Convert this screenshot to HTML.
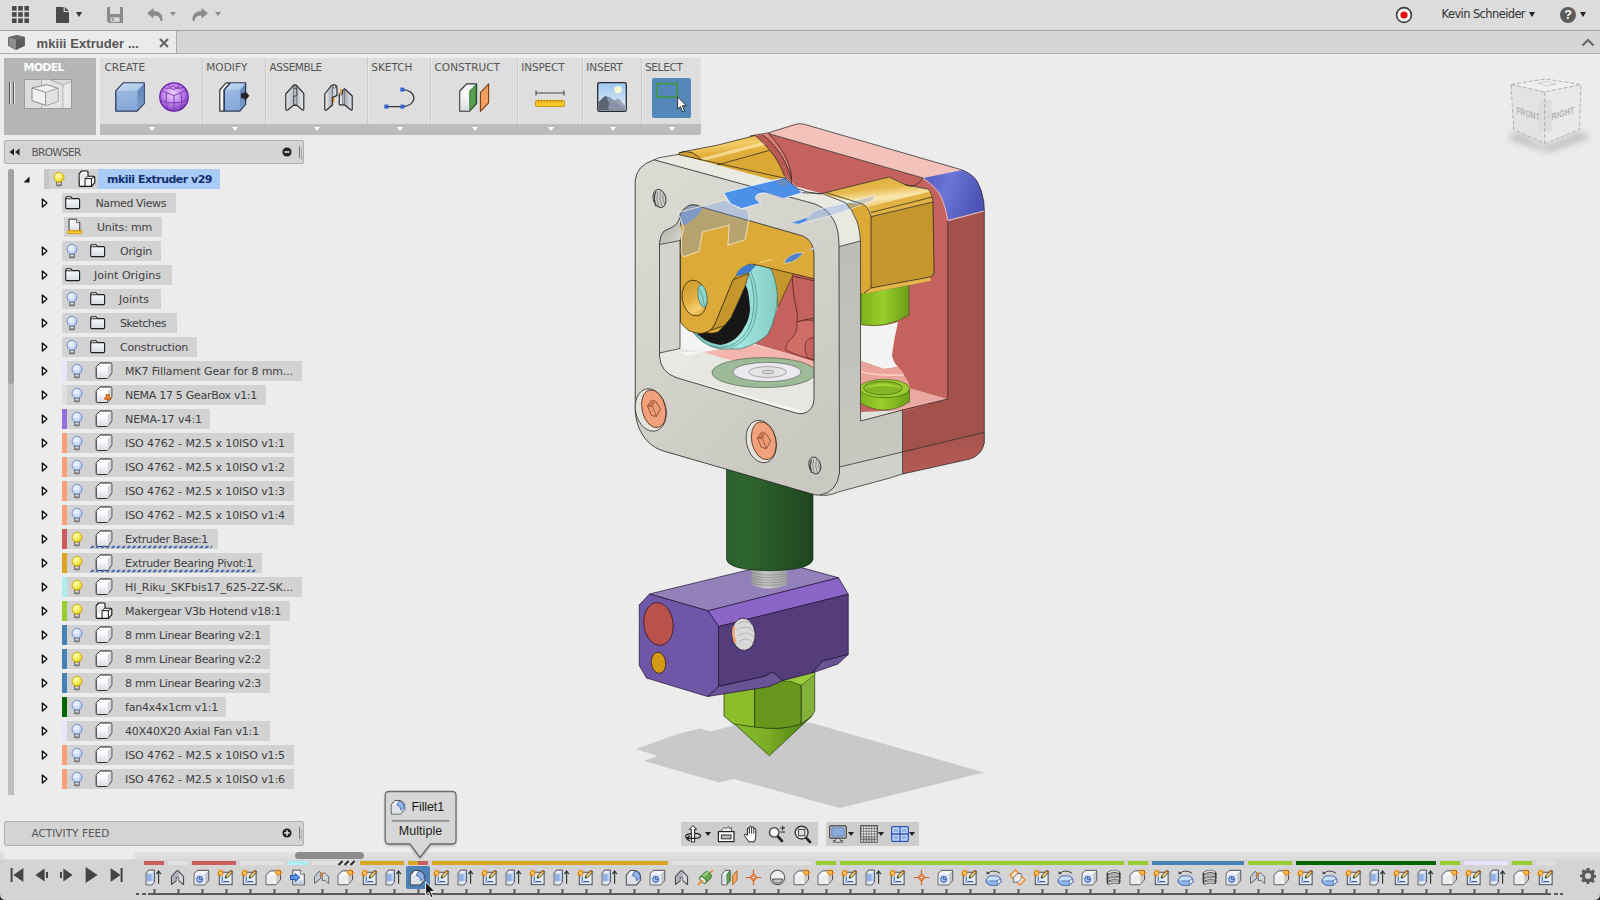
<!DOCTYPE html>
<html lang="en">
<head>
<meta charset="utf-8">
<title>mkiii Extruder v29</title>
<style>
*{box-sizing:border-box;margin:0;padding:0}
html,body{width:1600px;height:900px;overflow:hidden;background:#ececec;font-family:"DejaVu Sans","Liberation Sans",sans-serif;color:#4a4a4a}
.abs{position:absolute}
#app{position:relative;width:1600px;height:900px;overflow:hidden;background:#ececec}
#topbar{left:0;top:0;width:1600px;height:31px;background:#dcdcdc;border-bottom:1px solid #a2a2a2}
#tabbar{left:0;top:31px;width:1600px;height:23px;background:#d6d6d6;border-bottom:1px solid #aeaeae}
#tab{left:0;top:0;width:177px;height:22px;background:#ebebeb;border-right:1px solid #aaa}
#tab .t{left:36px;top:3px;font-size:13px;font-weight:bold;color:#555;white-space:nowrap;letter-spacing:-0.2px}
#user{left:1441px;top:7px;font-size:12px;color:#333;white-space:nowrap}
.grp{top:58px;height:76.500px;background:#dedede}
.grp .strip{left:0;bottom:0;width:100%;height:10.800px;background:#bcbcbc}
.grp .lbl{left:5px;top:2px;font-size:11px;color:#505050;white-space:nowrap}
.grp .dd{bottom:3.200px;width:0;height:0;border-left:3.5px solid transparent;border-right:3.5px solid transparent;border-top:4px solid #fff}
#model{left:4px;top:58px;width:92px;height:76.500px;background:#b5b5b5}
#model .lbl{left:19px;top:1px;font-size:11.5px;font-weight:bold;color:#fff;white-space:nowrap}
.ph{left:4px;width:300px;height:24px;background:#d4d4d4;border:1px solid #b0b0b0;border-radius:2px}
.ph .lbl{left:26px;top:4px;font-size:11px;color:#555;white-space:nowrap}
.row{height:20px;background:#d2d2d2}
.row .tx{top:3px;font-size:11px;color:#444;white-space:nowrap}
.strip5{left:0;top:0;width:5px;height:20px}
svg{position:absolute;overflow:visible}
</style>
</head>
<body>
<div id="app">

<svg width="0" height="0" style="position:absolute">
<defs>
<linearGradient id="gWhite" x1="0" y1="0" x2="0" y2="1"><stop offset="0" stop-color="#ffffff"/><stop offset="1" stop-color="#d9dde3"/></linearGradient>
<linearGradient id="gBlue" x1="0" y1="0" x2="0" y2="1"><stop offset="0" stop-color="#b8d0ee"/><stop offset="1" stop-color="#7fa3d6"/></linearGradient>
<radialGradient id="gBulbOn" cx="0.4" cy="0.35" r="0.7"><stop offset="0" stop-color="#ffffc0"/><stop offset="0.6" stop-color="#f7e84a"/><stop offset="1" stop-color="#d8b820"/></radialGradient>
<radialGradient id="gBulbOff" cx="0.4" cy="0.35" r="0.7"><stop offset="0" stop-color="#f4f8ff"/><stop offset="0.7" stop-color="#c4d4f4"/><stop offset="1" stop-color="#9ab0e0"/></radialGradient>
<radialGradient id="gSphere" cx="0.45" cy="0.4" r="0.6"><stop offset="0" stop-color="#f0d8ff"/><stop offset="0.7" stop-color="#b070e0"/><stop offset="1" stop-color="#8040c0"/></radialGradient>

<!-- tree icons -->
<symbol id="bulbOn" viewBox="0 0 14 18" overflow="visible">
 <rect x="4.500" y="10.400" width="5" height="4.600" rx="1.100" fill="#8c8c8c" stroke="#5e5e5e" stroke-width="0.800"/>
 <rect x="5.100" y="12" width="3.800" height="1.200" fill="#d8d8d8"/>
 <path d="M5.400 15.600 H8.600" stroke="#b8b8b8" stroke-width="0.800"/>
 <circle cx="7" cy="6.300" r="5" fill="url(#gBulbOn)" stroke="#c8a818" stroke-width="0.900"/>
</symbol>
<symbol id="bulbOff" viewBox="0 0 14 18" overflow="visible">
 <rect x="4.500" y="10.400" width="5" height="4.600" rx="1.100" fill="#8c8c8c" stroke="#5e5e5e" stroke-width="0.800"/>
 <rect x="5.100" y="12" width="3.800" height="1.200" fill="#d8d8d8"/>
 <path d="M5.400 15.600 H8.600" stroke="#b8b8b8" stroke-width="0.800"/>
 <circle cx="7" cy="6.300" r="5" fill="url(#gBulbOff)" stroke="#6c88cc" stroke-width="0.900"/>
</symbol>
<symbol id="folder" viewBox="0 0 16 14" overflow="visible">
 <path d="M0.7 2.2 Q0.7 0.7 2 0.7 H6 L7 2.6 H13.6 Q14.6 2.6 14.6 3.6 V11.6 Q14.6 12.6 13.6 12.6 H1.7 Q0.7 12.6 0.7 11.6 Z" fill="url(#gWhite)" stroke="#1c1c1c" stroke-width="1.1" stroke-linejoin="round"/>
 <path d="M0.7 2.8 H6.6" stroke="#1c1c1c" stroke-width="0.9" fill="none"/>
</symbol>
<symbol id="doc" viewBox="0 0 16 16" overflow="visible">
 <path d="M2 1.2 H9.4 L12.8 4.6 V13.6 H2 Z" fill="url(#gWhite)" stroke="#333" stroke-width="1" stroke-linejoin="round"/>
 <path d="M9.4 1.2 V4.6 H12.8" fill="#fff" stroke="#333" stroke-width="0.8"/>
 <rect x="0.6" y="12.4" width="14.2" height="3.2" rx="0.8" fill="#f8d030" stroke="#d8960c" stroke-width="0.9"/>
 <path d="M3 12.6v1.4M5 12.6v1.4M7 12.6v1.4M9 12.6v1.4M11 12.6v1.4M13 12.6v1.4" stroke="#b87808" stroke-width="0.6"/>
</symbol>
<symbol id="cube" viewBox="0 0 18 18" overflow="visible">
 <path d="M1.2 5.6 Q1.2 4.6 2 4 L4.4 1.6 Q5 1 6 1 H15.6 Q16.8 1 16.8 2.2 V10.6 Q16.8 11.4 16.2 12 L13 15.6 Q12.4 16.4 11.4 16.4 H2.4 Q1.2 16.4 1.2 15.2 Z" fill="#fafafa" stroke="#1c1c1c" stroke-width="1" stroke-linejoin="round"/>
 <path d="M1.8 5 H12.6 V16" fill="none" stroke="#f4f4f4" stroke-width="0.9"/>
 <rect x="2" y="5.6" width="10.2" height="10" fill="url(#gWhite)"/>
 <path d="M12.8 5 L16.4 1.6 V10.8 L12.8 15.4 Z" fill="#d4d6da"/>
</symbol>
<symbol id="asm" viewBox="0 0 18 18" overflow="visible">
 <path d="M1.2 3.6 L3.6 1 H9 Q10 1 10 2 V6.2 H15.6 Q16.8 6.2 16.8 7.4 V12.6 L13.6 16.4 H2.4 Q1.2 16.4 1.2 15.2 Z" fill="#fafafa" stroke="#151515" stroke-width="1.15" stroke-linejoin="round"/>
 <path d="M7 8.6 L9.4 6.2 M7 8.6 V16.2 M7 8.6 H13.4 L16.4 6.6 M13.4 8.6 V16" fill="none" stroke="#151515" stroke-width="1"/>
 <path d="M1.8 3.8 H7.6 V8 H1.8 Z" fill="#e4e6ea"/>
 <path d="M1.6 9.4 H6.6" stroke="#cfcfcf" stroke-width="0.8"/>
</symbol>
<symbol id="pin" viewBox="0 0 8 10" overflow="visible">
 <path d="M2 0.6 H6 L5.4 2.6 Q7.4 3.6 7.4 5.6 H0.6 Q0.6 3.6 2.6 2.6 Z" fill="#f08020" stroke="#c04808" stroke-width="0.8" stroke-linejoin="round"/>
 <path d="M4 5.6 V9.4" stroke="#333" stroke-width="0.9"/>
</symbol>
<symbol id="exp" viewBox="0 0 8 10" overflow="visible">
 <path d="M1.4 1 L6 5 L1.4 9 Z" fill="#f4f4f4" stroke="#0a0a0a" stroke-width="1.3" stroke-linejoin="round"/>
</symbol>
<!-- timeline icons: 18x18 -->
<symbol id="tStar" viewBox="0 0 8 8" overflow="visible">
 <path d="M4 0V8M0 4H8M1.2 1.2L6.8 6.8M6.8 1.2L1.2 6.8" stroke="#f08000" stroke-width="1.3"/>
 <circle cx="4" cy="4" r="1.6" fill="#ffd860"/>
</symbol>
<symbol id="tExtrude" viewBox="0 0 18 18" overflow="visible">
 <path d="M1.2 4.4 L3.6 1.2 H10 V13.6 L7.6 16.8 H1.2 Z" fill="#e8eef8" stroke="#444" stroke-width="1" stroke-linejoin="round"/>
 <path d="M1.8 5 H7.2 V13 H1.8 Z" fill="#8fb2e2"/>
 <path d="M7.8 4.6 L9.6 2.2 V12 L7.8 14 Z" fill="#a8c4ea"/>
 <path d="M1.8 13.6 H7.2 V16.2 H1.8 Z" fill="#dfe8f4"/>
 <path d="M14.4 15.6 V3" stroke="#333" stroke-width="1.2"/>
 <path d="M12 5.4 L14.4 2 L16.8 5.4" fill="none" stroke="#333" stroke-width="1.2"/>
</symbol>
<symbol id="tJoint" viewBox="0 0 18 18" overflow="visible">
 <path d="M2.600 8.200 L8 2.200 Q9 1.400 10 2.200 L15.400 8.200 V16.400 L10.600 12.600 V9.400 L9 8 L7.400 9.400 V12.600 L2.600 16.400 Z" fill="#c4c8d0" stroke="#4a4a4a" stroke-width="1.200" stroke-linejoin="round"/>
 <path d="M3.400 8.600 L7.200 4.400 V11.800 L3.400 14.800 Z" fill="#aeb2bc"/>
 <path d="M10.800 4.400 L14.600 8.600 V14.800 L10.800 11.800 Z" fill="#d8dce2"/>
 <path d="M7.400 9.400 L9 4 L10.600 9.400 L9 8 Z" fill="#eceef2" stroke="#666" stroke-width="0.500"/>
</symbol>
<symbol id="tComp" viewBox="0 0 18 18" overflow="visible">
 <path d="M1.2 5 L4.6 1.4 H16.6 V12.2 L12.6 16.8 H1.2 Z" fill="#f4f6fa" stroke="#444" stroke-width="1" stroke-linejoin="round"/>
 <rect x="1.8" y="5.4" width="10.4" height="10.8" fill="#dfe4ee"/>
 <path d="M12.8 5 L16 1.8 V12 L12.8 15.8 Z" fill="#c4c8d2"/>
 <circle cx="7" cy="11" r="3.2" fill="#9dbcee" stroke="#3c5ca8" stroke-width="1"/>
 <path d="M7 7.8 V11 H10.2" fill="none" stroke="#3c5ca8" stroke-width="1"/>
</symbol>
<symbol id="tSketch" viewBox="0 0 18 18" overflow="visible">
 <rect x="2.4" y="3.4" width="13.6" height="13.2" fill="#e4eaf4" stroke="#444" stroke-width="1"/>
 <path d="M5.6 8 V13.4 H13" fill="none" stroke="#3c5ca8" stroke-width="1.2"/>
 <rect x="4" y="12" width="3" height="3" fill="#9ab4e4"/>
 <path d="M8.6 9.6 L9.4 6.8 L14.4 1.8 Q15.2 1.2 16 2 Q16.8 2.8 16.2 3.6 L11.2 8.8 Z" fill="#f8d868" stroke="#222" stroke-width="0.9" stroke-linejoin="round"/>
 <path d="M14.2 2 L16 3.8" stroke="#c06020" stroke-width="1.6"/>
 <path d="M8.6 9.6 L9.2 7.6 L10.6 9 Z" fill="#222"/>
 <use href="#tStar" x="0" y="0.4" width="7.6" height="7.6"/>
</symbol>
<symbol id="tNewBody" viewBox="0 0 18 18" overflow="visible">
 <path d="M1.2 6.4 L5.6 2 H16.4 V11.4 L11.6 16.6 H1.2 Z" fill="#fbfbfd" stroke="#444" stroke-width="1" stroke-linejoin="round"/>
 <rect x="1.8" y="6.8" width="9.6" height="9.2" fill="#eceef4"/>
 <path d="M12 6.4 L15.8 2.6 V11.2 L12 15.4 Z" fill="#c8ccd4"/>
 <use href="#tStar" x="10.4" y="0" width="7.6" height="7.6"/>
</symbol>
<symbol id="tInsert" viewBox="0 0 18 18" overflow="visible">
 <path d="M4 1.2 H12 L16.2 5.4 V16.8 H4 Z" fill="#f2f4f8" stroke="#444" stroke-width="1" stroke-linejoin="round"/>
 <path d="M12 1.2 V5.4 H16.2" fill="#fff" stroke="#444" stroke-width="0.8"/>
 <path d="M4.6 12 H15.6 V16.2 H4.6 Z" fill="#c8d0de"/>
 <path d="M1.6 7 H6.6 V4.8 L11.6 9 L6.6 13.2 V11 H1.6 Z" fill="#5c98ee" stroke="#1c48b0" stroke-width="1" stroke-linejoin="round"/>
</symbol>
<symbol id="tAsBuilt" viewBox="0 0 18 18" overflow="visible">
 <path d="M1.6 8 L6.4 2.4 L8.2 4 V10 L1.6 15.4 Z" fill="#c4c8d0" stroke="#555" stroke-width="0.9" stroke-linejoin="round"/>
 <path d="M9.8 5.6 L12.4 4 L16.6 8.4 V15.6 L12.6 12 L9.8 12.4 Z" fill="#d0d6de" stroke="#555" stroke-width="0.9" stroke-linejoin="round"/>
 <path d="M8.2 4 L9.8 5.6 V9.4 L8.2 10 Z" fill="#e8e8ec" stroke="#666" stroke-width="0.6"/>
 <path d="M9 3.4 V8.4" stroke="#f08020" stroke-width="1.6"/>
</symbol>
<symbol id="tFillet" viewBox="0 0 18 18" overflow="visible">
 <path d="M1.400 6.400 L5.600 1.600 H10 Q16.600 2.400 16.600 9.600 V11.600 L12.200 16.800 H1.400 Z" fill="#f2f4f8" stroke="#444" stroke-width="1.100" stroke-linejoin="round"/>
 <path d="M2 7 H7.600 Q12 7.600 12.200 12 V16.200 H2 Z" fill="#dde1ea"/>
 <path d="M7.600 6.800 L10.400 2.200 Q16 3.200 16.200 9.800 L12.300 12.400 Q12 7.400 7.600 6.800 Z" fill="#8fb4e6" stroke="#3c5ca8" stroke-width="0.900" stroke-linejoin="round"/>
 <path d="M12.600 12.600 L16 10.200 V11.400 L12.600 15.400 Z" fill="#c4cad6"/>
</symbol>
<symbol id="tAxis" viewBox="0 0 18 18" overflow="visible">
 <path d="M1 17 L17 1" stroke="#f08830" stroke-width="1.500"/>
 <path d="M3.300 8.500 L8.500 3.300 Q11 1.600 13.600 4.400 Q16.400 7 14.700 9.500 L9.500 14.700 Z" fill="#6aa84f" stroke="#2f6a26" stroke-width="1" stroke-linejoin="round"/>
 <path d="M5.200 7.200 L9.800 3 Q11.400 2.400 12.600 3.600 L7.400 9 Z" fill="#9acc80"/>
 <ellipse cx="6.400" cy="11.600" rx="4.400" ry="2.300" transform="rotate(45 6.400 11.600)" fill="#eef4e8" stroke="#2f6a26" stroke-width="1"/>
 <path d="M1 17 L6.400 11.600" stroke="#f08830" stroke-width="1.500"/>
</symbol>
<symbol id="tPlane" viewBox="0 0 18 18" overflow="visible">
 <path d="M1 5.6 L4.6 1.4 H9.6 V12.6 L6 16.8 H1 Z" fill="#eef0f4" stroke="#444" stroke-width="1" stroke-linejoin="round"/>
 <path d="M6.2 5.8 L9.4 2 V12.4 L6.2 16.2 Z" fill="#68a858" stroke="#2c6c28" stroke-width="0.8"/>
 <path d="M1.6 6 H5.6 V16.2 H1.6 Z" fill="#dde2ea"/>
 <path d="M12.4 6.8 L17 1.8 V11.6 L12.4 16.8 Z" fill="#f4a868" stroke="#b05410" stroke-width="0.9" stroke-linejoin="round"/>
</symbol>
<symbol id="tPoint" viewBox="0 0 18 18" overflow="visible">
 <path d="M9 0.800 V17.200 M0.800 9 H17.200" stroke="#d8601c" stroke-width="1.200"/>
 <path d="M9 5.400 L12.600 9 L9 12.600 L5.400 9 Z" fill="#f8d0ac" stroke="#d8601c" stroke-width="1.100"/>
 <circle cx="9" cy="9" r="1.500" fill="#fff4e8" stroke="#d8601c" stroke-width="0.900"/>
</symbol>
<symbol id="tHole" viewBox="0 0 18 18" overflow="visible">
 <circle cx="9" cy="9" r="7.6" fill="#f0f0f2" stroke="#555" stroke-width="1.1"/>
 <path d="M3.6 10.6 H14.4 Q13.4 15 9 15 Q4.6 15 3.6 10.6 Z" fill="#c8c8cc" stroke="#444" stroke-width="1"/>
</symbol>
<symbol id="tRevolve" viewBox="0 0 18 18" overflow="visible">
 <path d="M1.200 11.400 L4.400 7.400 H13.800 L16.800 10.400 V14 L13 17.200 H5.200 L1.200 14.200 Z" fill="#8fb6e6" stroke="#33529c" stroke-width="1" stroke-linejoin="miter"/>
 <path d="M1.800 11.400 L4.700 8 H13.500 L16 10.400 L13 12.600 H5 Z" fill="#c8def6"/>
 <path d="M5 12.600 H13 V16.600 H5.400 L2 14 V11.800 Z" fill="#8fb6e6"/>
 <path d="M13.400 12.800 L16.200 10.800 V13.800 L13.400 16.200 Z" fill="#f4f8ff"/>
 <path d="M5 12.600 H13 L16 10.400 M13 12.600 V16.800" fill="none" stroke="#33529c" stroke-width="0.700"/>
 <path d="M2.600 4.600 Q8.800 -0.400 15.600 4.400" fill="none" stroke="#444" stroke-width="1.100"/>
 <path d="M1.200 2.400 L2 5.800 L5.200 4.600 Z" fill="#444"/>
</symbol>
<symbol id="tOffPlane" viewBox="0 0 18 18" overflow="visible">
 <path d="M1 6.6 L6.6 1 L17 11.4 L11.4 17 Z" fill="#fbe4cc" stroke="#e08830" stroke-width="1.3" stroke-linejoin="round"/>
 <path d="M4.6 9 L8.8 4.8 H12.6 V10.6 L9.4 14 H4.6 Z" fill="#e4e6ea" stroke="#555" stroke-width="0.9" stroke-linejoin="round"/>
 <path d="M9.6 8 L12.2 5.4 V10.4 L9.6 13.2 Z" fill="#fff"/>
</symbol>
<symbol id="tCoil" viewBox="0 0 18 18" overflow="visible">
 <g fill="none" stroke="#4a4a4a" stroke-width="3" stroke-linecap="round">
 <path d="M3.400 4.400 Q9 0.800 14.600 3.600"/><path d="M3.400 8 Q9 5.200 14.800 7"/><path d="M3.400 11.600 Q9 9.200 14.800 10.600"/><path d="M3.600 15.200 Q9 13.200 14.600 14.400"/>
 </g>
 <g fill="none" stroke="#d4d4d4" stroke-width="1.800" stroke-linecap="round">
 <path d="M3.600 4.200 Q9 0.600 14.400 3.400"/><path d="M3.600 7.800 Q9 5 14.600 6.800"/><path d="M3.600 11.400 Q9 9 14.600 10.400"/><path d="M3.800 15 Q9 13 14.400 14.200"/>
 </g>
 <path d="M3 4.600 Q1.400 6.400 3.200 8.200 M3 8.200 Q1.400 10 3.200 11.800 M3 11.800 Q1.600 13.600 3.400 15.400 M15 3.600 Q16.800 5.400 15 7.200 M15 7.200 Q16.800 9 15 10.800 M15 10.800 Q16.600 12.800 14.800 14.600" fill="none" stroke="#3c3c3c" stroke-width="1.500"/>
</symbol>
<!-- toolbar icons -->
<linearGradient id="gBoxF" x1="0" y1="0" x2="0.3" y2="1"><stop offset="0" stop-color="#a4c0e6"/><stop offset="1" stop-color="#86a8d8"/></linearGradient>
<linearGradient id="gBoxT" x1="0" y1="0" x2="1" y2="1"><stop offset="0" stop-color="#c8dcf4"/><stop offset="1" stop-color="#a8c4e8"/></linearGradient>
<linearGradient id="gBoxR" x1="0" y1="0" x2="0" y2="1"><stop offset="0" stop-color="#5f82b8"/><stop offset="1" stop-color="#7c9ccc"/></linearGradient>
<linearGradient id="gMetal" x1="0" y1="0" x2="1" y2="0"><stop offset="0" stop-color="#f4f4f6"/><stop offset="0.5" stop-color="#aeb4be"/><stop offset="1" stop-color="#e8eaee"/></linearGradient>
<linearGradient id="gSky" x1="0" y1="0" x2="0" y2="1"><stop offset="0" stop-color="#9cc8f0"/><stop offset="1" stop-color="#e4f0f8"/></linearGradient>
<symbol id="bBox" viewBox="0 0 30 30" overflow="visible">
 <path d="M0.8 9 L8.4 0.8 H29.2 V21.6 L21.8 29.2 H0.8 Z" fill="url(#gBoxF)" stroke="#2c3e60" stroke-width="1.3" stroke-linejoin="round"/>
 <path d="M1.6 8.8 L8.6 1.6 H28.4 L21.8 8.8 Z" fill="url(#gBoxT)"/>
 <path d="M22.4 9.2 L28.6 2.4 V21.4 L22.4 27.8 Z" fill="url(#gBoxR)"/>
</symbol>
<symbol id="bSphere" viewBox="0 0 30 30" overflow="visible">
 <circle cx="15" cy="15" r="14.2" fill="url(#gSphere)" stroke="#6a20a8" stroke-width="1.3"/>
 <g fill="none" stroke="#8038b8" stroke-width="1">
 <path d="M15 13.6 V29 M15 13.6 L2.4 8.6 M15 13.6 L27.4 8"/>
 <path d="M7.6 11 Q6 20 8.6 27.4 M22 10.6 Q24 20 21.6 27.4"/>
 <path d="M1.6 18 Q8 21.6 15 21 Q22 21.4 28.4 17.6"/>
 <path d="M4.6 5.6 Q10 8 14 3.6 Q18 8 25.4 5.2"/>
 <path d="M10 2 Q9 6 15 7.4 Q21 6 20 2"/>
 </g>
</symbol>
<symbol id="bModify" viewBox="0 0 30 30" overflow="visible">
 <path d="M0.8 8 L7 0.8 H11 L5 8 V29.2 H0.8 Z" fill="#f4f6f8" stroke="#333" stroke-width="1.2" stroke-linejoin="round"/>
 <path d="M5.4 8 L11.6 0.8 H26.6 V22.4 L20.6 29.2 H5.4 Z" fill="url(#gBoxF)" stroke="#2c3e60" stroke-width="1.3" stroke-linejoin="round"/>
 <path d="M6.2 7.8 L12 1.6 H25.8 L20.4 7.8 Z" fill="url(#gBoxT)"/>
 <path d="M21 8.4 L26 2.6 V22.2 L21 27.8 Z" fill="url(#gBoxR)"/>
 <path d="M22.4 11.6 H26 V9.2 L30 13.8 L26 18.4 V16 H22.4 Z" fill="#222" stroke="#111" stroke-width="0.6"/>
</symbol>
<symbol id="bJoint" viewBox="0 0 20 27" overflow="visible">
 <path d="M0.8 10 L8 1.8 Q10 0 12 1.8 L18.8 9.6 V25 Q18.8 26.6 17.2 25.8 L11.8 21.4 H8.4 L2.6 26 Q0.8 26.8 0.8 25 Z" fill="url(#gMetal)" stroke="#2a2a2a" stroke-width="1.2" stroke-linejoin="round"/>
 <path d="M8.4 4 H11.8 V12 H8.6 V21 H11.6" fill="none" stroke="#444" stroke-width="0.9"/>
 <path d="M8.4 4 V21.4 M11.8 4 V21.4" stroke="#555" stroke-width="0.7"/>
 <path d="M1.6 10.4 L8 3.4 V20.8 L1.6 25 Z" fill="#c4c8d0" opacity="0.6"/>
 <circle cx="10" cy="3" r="1.3" fill="#fff" stroke="#222" stroke-width="0.7"/>
</symbol>
<symbol id="bAsBuilt" viewBox="0 0 29 27" overflow="visible">
 <path d="M0.8 10 L7 2 Q9 0.2 11.4 1 Q13 1.8 13 3.6 V11.4 L8.4 13.6 V21 L2.6 26 Q0.8 26.8 0.8 25 Z" fill="url(#gMetal)" stroke="#2a2a2a" stroke-width="1.2" stroke-linejoin="round"/>
 <path d="M8.4 3 V13.4" stroke="#555" stroke-width="0.7"/>
 <circle cx="10.4" cy="2.8" r="1.3" fill="#fff" stroke="#222" stroke-width="0.7"/>
 <path d="M15.4 10 Q17 8.6 18.6 10 V6.6 L20.6 4.8 L28.2 12 V25 Q28.2 26.8 26.6 25.8 L20.4 20.8 H16 Q15.2 20.8 15.2 19.8 Z" fill="url(#gMetal)" stroke="#2a2a2a" stroke-width="1.2" stroke-linejoin="round"/>
 <path d="M18.8 10 V20.6 M20.6 5 V20.6" stroke="#555" stroke-width="0.7"/>
 <ellipse cx="17" cy="10.2" rx="1.6" ry="0.9" fill="#fff" stroke="#333" stroke-width="0.6"/>
 <path d="M17 5 V9.4 M9.6 14 V18.6" stroke="#f08820" stroke-width="1.5"/>
</symbol>
<symbol id="bSketch" viewBox="0 0 30 22" overflow="visible">
 <path d="M2.4 19.6 H18.4 A11.5 8.5 0 0 0 18.4 2.6" fill="none" stroke="#333" stroke-width="1.2"/>
 <rect x="0.4" y="17.6" width="4" height="4" fill="#2f62d0"/>
 <rect x="16.4" y="17.6" width="4" height="4" fill="#2f62d0"/>
 <rect x="16.4" y="0.6" width="4" height="4" fill="#2f62d0"/>
</symbol>
<symbol id="bConstruct" viewBox="0 0 31 29" overflow="visible">
 <path d="M0.8 8 L7.6 0.8 H17.6 V20.6 L10.6 28.2 H0.8 Z" fill="#f2f4f8" stroke="#333" stroke-width="1.2" stroke-linejoin="round"/>
 <path d="M1.6 8.4 H10 V27.4 H1.6 Z" fill="url(#gWhite)"/>
 <path d="M10.8 8 L17 1.6 V20.4 L10.8 27.2 Z" fill="#5aa04c" stroke="#2c6c28" stroke-width="0.9"/>
 <path d="M21.4 9.6 L29.6 0.8 V19.8 L21.4 28.4 Z" fill="#f0a060" stroke="#7a3c10" stroke-width="1.1" stroke-linejoin="round"/>
</symbol>
<symbol id="bInspect" viewBox="0 0 30 18" overflow="visible">
 <path d="M1 3 H29 M1 0.4 V5.6 M29 0.4 V5.6" stroke="#444" stroke-width="1.1" fill="none"/>
 <rect x="0.6" y="10.4" width="28.8" height="6" rx="1.2" fill="#f8cc28" stroke="#c88c08" stroke-width="1"/>
 <path d="M3.4 10.8v2M6.3 10.8v2M9.2 10.8v2M12.1 10.8v2M15 10.8v2M17.9 10.8v2M20.8 10.8v2M23.7 10.8v2M26.6 10.8v2" stroke="#a87008" stroke-width="0.8"/>
</symbol>
<symbol id="bInsert" viewBox="0 0 30 30" overflow="visible">
 <rect x="0.7" y="0.7" width="28.6" height="28.6" rx="1.6" fill="url(#gSky)" stroke="#2a2a30" stroke-width="1.3"/>
 <circle cx="21" cy="7.6" r="3.6" fill="#fffbe0"/><circle cx="21" cy="7.6" r="2.2" fill="#fff8c0"/>
 <path d="M15 20 L21 16 L28.6 24 V28.6 H15 Z" fill="#98a4b6"/>
 <path d="M1.4 20 L8 14 L13 15.6 L28.6 28.6 H1.4 Z" fill="#5c6474"/>
 <path d="M9.6 14.6 L13 15.6 L28.6 28.6 H12 Q10 25 12.6 22 Q10 18 9.6 14.6 Z" fill="#8a94a8"/>
</symbol>
<symbol id="cursorW" viewBox="0 0 10 17" overflow="visible">
 <path d="M0.6 0.8 V13.2 L3.4 10.6 L5.6 15.8 L7.6 15 L5.4 9.8 H9.4 Z" fill="#fff" stroke="#222" stroke-width="0.9" stroke-linejoin="round"/>
</symbol>
<symbol id="cursorB" viewBox="0 0 10 17" overflow="visible">
 <path d="M0.6 0.8 V13.2 L3.4 10.6 L5.6 15.8 L7.6 15 L5.4 9.8 H9.4 Z" fill="#111" stroke="#fff" stroke-width="0.9" stroke-linejoin="round"/>
</symbol>
<symbol id="bModel" viewBox="0 0 48 30" overflow="visible">
 <rect x="0.5" y="0.5" width="47" height="29" fill="#dcdcdc" stroke="#9c9c9c" stroke-width="1"/>
 <path d="M17.6 0.5 V29.5" stroke="#a4a4a4" stroke-width="0.9"/>
 <path d="M18 0.8 H26 L38.6 6 V29 H18 Z" fill="#e4e4e4"/>
 <path d="M26 0.8 L39 6 L47 2.4 M39 6 V29.4" fill="none" stroke="#a0a0a0" stroke-width="0.9"/>
 <path d="M39.4 6.2 L47 2.8 V29 H39.4 Z" fill="#e8e8e8"/>
 <path d="M8 9 L23 5.6 L34 9.4 V22.6 L21.6 26.4 L8 21.6 Z" fill="#f2f2f2" stroke="#8c8c8c" stroke-width="1" stroke-linejoin="round"/>
 <path d="M8 9 L21.6 13.4 L34 9.4 M21.6 13.4 V26.4" fill="none" stroke="#8c8c8c" stroke-width="1"/>
 <path d="M22 13.8 L33.6 10 V22.4 L22 26 Z" fill="#e2e2e2"/>
</symbol>
<!-- top bar icons -->
<symbol id="iGrid" viewBox="0 0 17 17">
 <g fill="#4a4a4a"><rect x="0" y="0" width="4.6" height="4.6"/><rect x="6.2" y="0" width="4.6" height="4.6"/><rect x="12.4" y="0" width="4.6" height="4.6"/>
 <rect x="0" y="6.2" width="4.6" height="4.6"/><rect x="6.2" y="6.2" width="4.6" height="4.6"/><rect x="12.4" y="6.2" width="4.6" height="4.6"/>
 <rect x="0" y="12.4" width="4.6" height="4.6"/><rect x="6.2" y="12.4" width="4.6" height="4.6"/><rect x="12.4" y="12.4" width="4.6" height="4.6"/></g>
</symbol>
<symbol id="iFile" viewBox="0 0 13 16">
 <path d="M0 0 H7.6 V5 H13 V16 H0 Z M8.8 0 L13 4 H8.8 Z" fill="#4a4a4a"/>
</symbol>
<symbol id="iSave" viewBox="0 0 16 16">
 <path d="M0 1 Q0 0 1 0 H15 Q16 0 16 1 V15 Q16 16 15 16 H2 L0 14 Z" fill="#8a8a8a"/>
 <rect x="3" y="0" width="10" height="7" fill="#dcdcdc"/>
 <rect x="3.6" y="10.4" width="9" height="4.4" fill="#dcdcdc"/>
 <rect x="4.8" y="11.4" width="2" height="2.4" fill="#8a8a8a"/>
</symbol>
<symbol id="iUndo" viewBox="0 0 16 13">
 <path d="M6.4 0 V3 Q14 3 15.4 9 V13 H13.6 Q13 7.6 6.4 7.6 V10.6 L0 5.2 Z" fill="#8a8a8a"/>
</symbol>
<symbol id="iCubeTab" viewBox="0 0 17 15">
 <path d="M0.5 2.4 L9 0.4 L16.5 2.2 V10.6 L8 14.6 L0.5 10.6 Z" fill="#8e8e8e" stroke="#555" stroke-width="0.8" stroke-linejoin="round"/>
 <path d="M0.5 2.4 L8 4.6 L16.5 2.2 L9 0.4 Z" fill="#6a6a6a"/>
 <path d="M8 4.6 L16.5 2.2 V10.6 L8 14.6 Z" fill="#5c5c5c"/>
</symbol>
<symbol id="iGear" viewBox="0 0 16 16">
 <path d="M6.6 0 H9.4 L9.9 2.2 L11.3 2.8 L13.2 1.6 L14.9 3.4 L13.8 5.3 L14.3 6.7 L16 7.2 V9.4 L14.2 9.9 L13.6 11.3 L14.6 13.2 L12.8 14.9 L10.9 13.8 L9.5 14.3 L9 16 H6.8 L6.3 14.2 L4.9 13.6 L3 14.6 L1.3 12.8 L2.4 10.9 L1.9 9.5 L0 9 V6.8 L2 6.3 L2.6 4.9 L1.6 3 L3.4 1.3 L5.3 2.4 L6.2 2 Z M8 5 A3 3 0 1 0 8 11 A3 3 0 1 0 8 5 Z" fill="#5a5a5a" fill-rule="evenodd"/>
</symbol>
<!-- nav bar icons -->
<symbol id="nOrbit" viewBox="0 0 18 18" overflow="visible">
 <path d="M7.4 17 V4.4 H5.4 L9 0.6 L12.6 4.4 H10.6 V17 Z" fill="#fff" stroke="#222" stroke-width="1" stroke-linejoin="round"/>
 <path d="M7 8.6 Q1 9.4 1.6 11.6 Q2.4 13.4 7 13.4 M11 8.4 Q16.6 8.8 16.6 10.8 Q16 13.4 11 13.4 M11 13.4 H4" fill="none" stroke="#222" stroke-width="1.2"/>
 <path d="M5.6 10.8 L2.6 13.4 L5.6 16" fill="none" stroke="#222" stroke-width="1.3"/>
</symbol>
<symbol id="nLook" viewBox="0 0 18 18" overflow="visible">
 <path d="M3 7 L7.6 2 L8.6 3.6 L12 1.6 L12.6 3.6 L14.6 2.6 V7" fill="#e8e8e8" stroke="#555" stroke-width="0.9" stroke-linejoin="round"/>
 <rect x="1.4" y="6.6" width="15.6" height="10" fill="#fafafa" stroke="#222" stroke-width="1.2"/>
 <rect x="4.4" y="10" width="9.6" height="3.8" fill="#b8bcc4" stroke="#333" stroke-width="1"/>
</symbol>
<symbol id="nPan" viewBox="0 0 18 18" overflow="visible">
 <path d="M5.4 10.4 V4 Q5.4 2.8 6.4 2.8 Q7.4 2.8 7.4 4 V2.4 Q7.4 1.2 8.6 1.2 Q9.6 1.2 9.6 2.4 V3 Q9.6 1.8 10.8 1.8 Q11.8 1.8 11.8 3 V4.4 Q11.8 3.4 12.8 3.4 Q13.8 3.4 13.8 4.6 V10 Q13.8 14 12.4 16.8 H6.6 Q5.4 14 3.4 12.2 Q1.6 10.4 2.6 9.4 Q3.8 8.6 5.4 10.4 Z" fill="#fff" stroke="#222" stroke-width="1" stroke-linejoin="round"/>
 <path d="M7.4 4 V8.6 M9.6 3 V8.6 M11.8 4.4 V8.8" stroke="#222" stroke-width="0.9"/>
</symbol>
<symbol id="nZoom" viewBox="0 0 18 18" overflow="visible">
 <path d="M9 10.6 L14 16" stroke="#222" stroke-width="2.6" stroke-linecap="round"/>
 <circle cx="6.2" cy="7.4" r="4.8" fill="#dfe8f0" stroke="#444" stroke-width="1.3"/>
 <circle cx="6.2" cy="7.4" r="3" fill="#f8fbff"/>
 <path d="M12.4 3 H17 M14.7 0.8 V5.2 M12.4 7 H17" stroke="#222" stroke-width="1"/>
</symbol>
<symbol id="nFit" viewBox="0 0 18 18" overflow="visible">
 <path d="M11 11.6 L16 17" stroke="#222" stroke-width="2.6" stroke-linecap="round"/>
 <circle cx="7.6" cy="7.6" r="6.4" fill="#f4f4f4" stroke="#333" stroke-width="1.4"/>
 <rect x="4.4" y="4.4" width="6.4" height="6.4" fill="#dcdcdc" stroke="#444" stroke-width="1.1"/>
</symbol>
<symbol id="nDisplay" viewBox="0 0 18 18" overflow="visible">
 <rect x="0.8" y="0.8" width="16.4" height="12.4" rx="1" fill="#f0f0f0" stroke="#333" stroke-width="1.2"/>
 <rect x="2.8" y="2.8" width="12.4" height="8.4" fill="#8cacdc" stroke="#4c6ca8" stroke-width="0.8"/>
 <path d="M7 13.4 H11 V15.6 H13.6 V17.2 H4.4 V15.6 H7 Z" fill="#e8e8e8" stroke="#444" stroke-width="0.9"/>
</symbol>
<symbol id="nGrid" viewBox="0 0 18 18" overflow="visible">
 <rect x="0.8" y="0.8" width="16.4" height="16.4" fill="#f4f4f4" stroke="#333" stroke-width="1.1"/>
 <path d="M0.8 12 H17.2 V17.2 H0.8 Z" fill="#c4c4c8"/>
 <path d="M3.6 1v16M6.3 1v16M9 1v16M11.7 1v16M14.4 1v16M1 3.6h16M1 6.3h16M1 9h16M1 11.7h16M1 14.4h16" stroke="#555" stroke-width="0.7"/>
</symbol>
<symbol id="nViews" viewBox="0 0 18 16" overflow="visible">
 <rect x="0.7" y="0.7" width="16.6" height="14.6" rx="1" fill="#c8d8f4" stroke="#2c54b8" stroke-width="1.3"/>
 <path d="M9 0.8 V15.2 M0.8 8 H17.2" stroke="#2c54b8" stroke-width="1.3"/>
 <rect x="2.8" y="2.8" width="4.2" height="3.2" fill="#90b0e8"/><rect x="11" y="2.8" width="4.2" height="3.2" fill="#90b0e8"/>
 <rect x="2.8" y="10" width="4.2" height="3.2" fill="#90b0e8"/><rect x="11" y="10" width="4.2" height="3.2" fill="#90b0e8"/>
</symbol>
</defs>
</svg>

<div id="topbar" class="abs">
<svg style="left:12px;top:6px" width="17" height="17" ><use href="#iGrid" width="17" height="17"/></svg>
<svg style="left:56px;top:7px" width="13" height="16" ><use href="#iFile" width="13" height="16"/></svg>
<div class="abs" style="left:76px;top:12px;border-left:3.5px solid transparent;border-right:3.5px solid transparent;border-top:5px solid #333"></div>
<svg style="left:107px;top:7px" width="16" height="16" ><use href="#iSave" width="16" height="16"/></svg>
<svg style="left:147px;top:8px" width="16" height="13" ><use href="#iUndo" width="16" height="13"/></svg>
<div class="abs" style="left:170px;top:12px;border-left:3px solid transparent;border-right:3px solid transparent;border-top:4px solid #8a8a8a"></div>
<svg style="left:192px;top:8px" width="16" height="13"><use href="#iUndo" width="16" height="13" transform="translate(16 0) scale(-1 1)"/></svg>
<div class="abs" style="left:215px;top:12px;border-left:3px solid transparent;border-right:3px solid transparent;border-top:4px solid #8a8a8a"></div>
<svg style="left:1395px;top:6px" width="18" height="18"><circle cx="9" cy="9" r="7.4" fill="#f4f4f4" stroke="#3a3a3a" stroke-width="1.6"/><circle cx="9" cy="9" r="3.6" fill="#e01010"/></svg>
<div style="position:absolute;left:1441.6px;top:9.07px;font-family:'DejaVu Sans','Liberation Sans',sans-serif;font-size:11.5px;line-height:11.5px;font-weight:normal;color:#333;white-space:nowrap;letter-spacing:-0.611px">Kevin Schneider</div>
<div class="abs" style="left:1529px;top:12px;border-left:3.5px solid transparent;border-right:3.5px solid transparent;border-top:5px solid #222"></div>
<svg style="left:1560px;top:7px" width="16" height="16"><circle cx="8" cy="8" r="8" fill="#5c5c5c"/><text x="8" y="12.4" text-anchor="middle" font-family="Liberation Sans, sans-serif" font-weight="bold" font-size="12.5" fill="#fff">?</text></svg>
<div class="abs" style="left:1580px;top:12px;border-left:3.5px solid transparent;border-right:3.5px solid transparent;border-top:5px solid #222"></div>
</div>
<div id="tabbar" class="abs"><div id="tab" class="abs">
<svg style="left:8px;top:4px" width="17" height="15" ><use href="#iCubeTab" width="17" height="15"/></svg>
<div style="position:absolute;left:36.5px;top:5.80px;font-family:'Liberation Sans',sans-serif;font-size:13px;line-height:13px;font-weight:bold;color:#555;white-space:nowrap;letter-spacing:0.075px">mkiii Extruder ...</div>
<svg style="left:159px;top:7px" width="10" height="10"><path d="M1 1 L9 9 M9 1 L1 9" stroke="#666" stroke-width="2.2"/></svg>
</div>
<svg style="left:1581px;top:7px" width="14" height="9"><path d="M1.5 7.5 L7 2 L12.5 7.5" fill="none" stroke="#666" stroke-width="2.2"/></svg>
</div>
<div id="model" class="abs"><div style="position:absolute;left:19.5px;top:3.59px;font-family:'DejaVu Sans','Liberation Sans',sans-serif;font-size:11px;line-height:11px;font-weight:bold;color:#fff;white-space:nowrap;letter-spacing:-0.731px">MODEL</div>
<div class="abs" style="left:5px;top:24px;width:1px;height:22px;background:#555;box-shadow:1px 0 0 #e8e8e8"></div>
<div class="abs" style="left:9px;top:24px;width:1px;height:22px;background:#555;box-shadow:1px 0 0 #e8e8e8"></div>
<svg style="left:19.5px;top:20.5px" width="48" height="30" ><use href="#bModel" width="48" height="30"/></svg>
</div>
<div class="grp abs" style="left:100px;width:102px;">
<div class="strip abs" style=""></div>
<div style="position:absolute;left:4.5px;top:3.92px;font-family:'DejaVu Sans','Liberation Sans',sans-serif;font-size:10.5px;line-height:10.5px;font-weight:normal;color:#555;white-space:nowrap;letter-spacing:-0.031px">CREATE</div>
<div class="dd abs" style="left:48.5px"></div>
</div>
<div class="grp abs" style="left:202px;width:63px;">
<div class="abs" style="left:0;top:0;width:1px;height:76px;background:#cacaca"></div><div class="abs" style="left:1px;top:0;width:1px;height:76px;background:#e8e8e8"></div>
<div class="strip abs" style=""></div>
<div style="position:absolute;left:4.25px;top:3.92px;font-family:'DejaVu Sans','Liberation Sans',sans-serif;font-size:10.5px;line-height:10.5px;font-weight:normal;color:#555;white-space:nowrap;letter-spacing:0.047px">MODIFY</div>
<div class="dd abs" style="left:29.5px"></div>
</div>
<div class="grp abs" style="left:265px;width:102px;">
<div class="abs" style="left:0;top:0;width:1px;height:76px;background:#cacaca"></div><div class="abs" style="left:1px;top:0;width:1px;height:76px;background:#e8e8e8"></div>
<div class="strip abs" style=""></div>
<div style="position:absolute;left:4.5px;top:3.92px;font-family:'DejaVu Sans','Liberation Sans',sans-serif;font-size:10.5px;line-height:10.5px;font-weight:normal;color:#555;white-space:nowrap;letter-spacing:-0.457px">ASSEMBLE</div>
<div class="dd abs" style="left:48.5px"></div>
</div>
<div class="grp abs" style="left:367px;width:63px;">
<div class="abs" style="left:0;top:0;width:1px;height:76px;background:#cacaca"></div><div class="abs" style="left:1px;top:0;width:1px;height:76px;background:#e8e8e8"></div>
<div class="strip abs" style=""></div>
<div style="position:absolute;left:4.25px;top:3.92px;font-family:'DejaVu Sans','Liberation Sans',sans-serif;font-size:10.5px;line-height:10.5px;font-weight:normal;color:#555;white-space:nowrap;letter-spacing:0.005px">SKETCH</div>
<div class="dd abs" style="left:29.5px"></div>
</div>
<div class="grp abs" style="left:430px;width:87px;">
<div class="abs" style="left:0;top:0;width:1px;height:76px;background:#cacaca"></div><div class="abs" style="left:1px;top:0;width:1px;height:76px;background:#e8e8e8"></div>
<div class="strip abs" style=""></div>
<div style="position:absolute;left:4.5px;top:3.92px;font-family:'DejaVu Sans','Liberation Sans',sans-serif;font-size:10.5px;line-height:10.5px;font-weight:normal;color:#555;white-space:nowrap;letter-spacing:0.026px">CONSTRUCT</div>
<div class="dd abs" style="left:41.5px"></div>
</div>
<div class="grp abs" style="left:517px;width:65px;">
<div class="abs" style="left:0;top:0;width:1px;height:76px;background:#cacaca"></div><div class="abs" style="left:1px;top:0;width:1px;height:76px;background:#e8e8e8"></div>
<div class="strip abs" style=""></div>
<div style="position:absolute;left:4.25px;top:3.92px;font-family:'DejaVu Sans','Liberation Sans',sans-serif;font-size:10.5px;line-height:10.5px;font-weight:normal;color:#555;white-space:nowrap;letter-spacing:-0.154px">INSPECT</div>
<div class="dd abs" style="left:30.5px"></div>
</div>
<div class="grp abs" style="left:582px;width:59px;">
<div class="abs" style="left:0;top:0;width:1px;height:76px;background:#cacaca"></div><div class="abs" style="left:1px;top:0;width:1px;height:76px;background:#e8e8e8"></div>
<div class="strip abs" style=""></div>
<div style="position:absolute;left:4.25px;top:3.92px;font-family:'DejaVu Sans','Liberation Sans',sans-serif;font-size:10.5px;line-height:10.5px;font-weight:normal;color:#555;white-space:nowrap;letter-spacing:-0.159px">INSERT</div>
<div class="dd abs" style="left:27.5px"></div>
</div>
<div class="grp abs" style="left:641px;width:60px;border-radius:0 0 3px 0;">
<div class="abs" style="left:0;top:0;width:1px;height:76px;background:#cacaca"></div><div class="abs" style="left:1px;top:0;width:1px;height:76px;background:#e8e8e8"></div>
<div class="strip abs" style="border-radius:0 0 3px 0;"></div>
<div style="position:absolute;left:4px;top:3.92px;font-family:'DejaVu Sans','Liberation Sans',sans-serif;font-size:10.5px;line-height:10.5px;font-weight:normal;color:#555;white-space:nowrap;letter-spacing:-0.339px">SELECT</div>
<div class="dd abs" style="left:27.5px"></div>
</div>
<svg style="left:115px;top:82px" width="30" height="30" ><use href="#bBox" width="30" height="30"/></svg>
<svg style="left:159px;top:81.5px" width="30" height="30" ><use href="#bSphere" width="30" height="30"/></svg>
<svg style="left:219px;top:82px" width="30" height="30" ><use href="#bModify" width="30" height="30"/></svg>
<svg style="left:284.5px;top:84px" width="20" height="27" ><use href="#bJoint" width="20" height="27"/></svg>
<svg style="left:323.5px;top:84px" width="29" height="27" ><use href="#bAsBuilt" width="29" height="27"/></svg>
<svg style="left:384px;top:87px" width="30" height="22" ><use href="#bSketch" width="30" height="22"/></svg>
<svg style="left:459px;top:83px" width="31" height="29" ><use href="#bConstruct" width="31" height="29"/></svg>
<svg style="left:534.5px;top:89.6px" width="30" height="18" ><use href="#bInspect" width="30" height="18"/></svg>
<svg style="left:597px;top:82px" width="30" height="30" ><use href="#bInsert" width="30" height="30"/></svg>
<div class="abs" style="left:651.5px;top:78px;width:39px;height:39.5px;background:#5488b8;border-radius:2px"></div>
<svg style="left:651px;top:78px" width="40" height="40"><rect x="5.6" y="5.6" width="20.6" height="13.6" fill="none" stroke="#3f9a3f" stroke-width="1.6"/></svg>
<svg style="left:676.5px;top:95.5px" width="10" height="17" ><use href="#cursorW" width="10" height="17"/></svg>
<div class="ph abs" style="top:139.5px"><div style="position:absolute;left:26.5px;top:6.22px;font-family:'DejaVu Sans','Liberation Sans',sans-serif;font-size:10.5px;line-height:10.5px;font-weight:normal;color:#555;white-space:nowrap;letter-spacing:-0.650px">BROWSER</div>
<svg style="left:4px;top:7px" width="12" height="9"><path d="M5 0.5 V7.5 L0.5 4 Z M10.5 0.5 V7.5 L6 4 Z" fill="#222"/></svg>
<svg style="left:277px;top:6px" width="10" height="10"><circle cx="5" cy="5" r="4.6" fill="#222"/><rect x="2.4" y="4.2" width="5.2" height="1.6" fill="#ddd"/></svg>
<div class="abs" style="left:294px;top:5px;width:1px;height:12px;background:#777;box-shadow:2px 2px 0 -0px #aaa"></div>
</div>
<div class="abs" style="left:8px;top:169px;width:6px;height:626px;background:#bebebe;border-radius:3px 3px 0 0"></div>
<div class="abs" style="left:8px;top:169px;width:6px;height:215px;background:#a2a2a2;border-radius:3px"></div>
<svg style="left:22.5px;top:175.5px" width="7" height="7"><path d="M6.5 0.5 V6.5 H0.5 Z" fill="#111"/></svg>
<div class="row abs" style="left:44px;top:169px;width:176px">
<div class="abs" style="left:0;top:0;width:5px;height:20px;background:#c6c6c6"></div>
<div class="abs" style="left:54px;top:0;width:122px;height:20px;background:#a8cbf7"></div>
</div>
<svg style="left:52.4px;top:171px" width="14" height="18" ><use href="#bulbOn" width="14" height="18"/></svg>
<svg style="left:77.5px;top:170.4px" width="18" height="18" ><use href="#asm" width="18" height="18"/></svg>
<div style="position:absolute;left:107px;top:174.29px;font-family:'DejaVu Sans','Liberation Sans',sans-serif;font-size:11px;line-height:11px;font-weight:bold;color:#14306e;white-space:nowrap;letter-spacing:-0.506px">mkiii Extruder v29</div>
<svg style="left:41.2px;top:198px" width="8" height="10" ><use href="#exp" width="8" height="10"/></svg>
<div class="row abs" style="left:62px;top:193px;width:114px">
</div>
<svg style="left:64.6px;top:196px" width="16" height="14" ><use href="#folder" width="16" height="14"/></svg>
<div style="position:absolute;left:95.5px;top:198.29px;font-family:'DejaVu Sans','Liberation Sans',sans-serif;font-size:11px;line-height:11px;font-weight:normal;color:#404040;white-space:nowrap;letter-spacing:-0.388px">Named Views</div>
<div class="row abs" style="left:64px;top:217px;width:98px">
</div>
<svg style="left:67px;top:218px" width="16" height="16" ><use href="#doc" width="16" height="16"/></svg>
<div style="position:absolute;left:97px;top:222.29px;font-family:'DejaVu Sans','Liberation Sans',sans-serif;font-size:11px;line-height:11px;font-weight:normal;color:#404040;white-space:nowrap;letter-spacing:-0.196px">Units: mm</div>
<svg style="left:41.2px;top:246px" width="8" height="10" ><use href="#exp" width="8" height="10"/></svg>
<div class="row abs" style="left:62px;top:241px;width:99px">
</div>
<svg style="left:65.3px;top:243px" width="14" height="18" ><use href="#bulbOff" width="14" height="18"/></svg>
<svg style="left:89.6px;top:244px" width="16" height="14" ><use href="#folder" width="16" height="14"/></svg>
<div style="position:absolute;left:120px;top:246.29px;font-family:'DejaVu Sans','Liberation Sans',sans-serif;font-size:11px;line-height:11px;font-weight:normal;color:#404040;white-space:nowrap;letter-spacing:-0.208px">Origin</div>
<svg style="left:41.2px;top:270px" width="8" height="10" ><use href="#exp" width="8" height="10"/></svg>
<div class="row abs" style="left:62px;top:265px;width:110px">
</div>
<svg style="left:64.6px;top:268px" width="16" height="14" ><use href="#folder" width="16" height="14"/></svg>
<div style="position:absolute;left:94px;top:270.29px;font-family:'DejaVu Sans','Liberation Sans',sans-serif;font-size:11px;line-height:11px;font-weight:normal;color:#404040;white-space:nowrap;letter-spacing:0.016px">Joint Origins</div>
<svg style="left:41.2px;top:294px" width="8" height="10" ><use href="#exp" width="8" height="10"/></svg>
<div class="row abs" style="left:62px;top:289px;width:99px">
</div>
<svg style="left:65.3px;top:291px" width="14" height="18" ><use href="#bulbOff" width="14" height="18"/></svg>
<svg style="left:89.6px;top:292px" width="16" height="14" ><use href="#folder" width="16" height="14"/></svg>
<div style="position:absolute;left:119px;top:294.29px;font-family:'DejaVu Sans','Liberation Sans',sans-serif;font-size:11px;line-height:11px;font-weight:normal;color:#404040;white-space:nowrap;letter-spacing:-0.008px">Joints</div>
<svg style="left:41.2px;top:318px" width="8" height="10" ><use href="#exp" width="8" height="10"/></svg>
<div class="row abs" style="left:62px;top:313px;width:115px">
</div>
<svg style="left:65.3px;top:315px" width="14" height="18" ><use href="#bulbOff" width="14" height="18"/></svg>
<svg style="left:89.6px;top:316px" width="16" height="14" ><use href="#folder" width="16" height="14"/></svg>
<div style="position:absolute;left:120px;top:318.29px;font-family:'DejaVu Sans','Liberation Sans',sans-serif;font-size:11px;line-height:11px;font-weight:normal;color:#404040;white-space:nowrap;letter-spacing:-0.445px">Sketches</div>
<svg style="left:41.2px;top:342px" width="8" height="10" ><use href="#exp" width="8" height="10"/></svg>
<div class="row abs" style="left:62px;top:337px;width:135px">
</div>
<svg style="left:65.3px;top:339px" width="14" height="18" ><use href="#bulbOff" width="14" height="18"/></svg>
<svg style="left:89.6px;top:340px" width="16" height="14" ><use href="#folder" width="16" height="14"/></svg>
<div style="position:absolute;left:120px;top:342.29px;font-family:'DejaVu Sans','Liberation Sans',sans-serif;font-size:11px;line-height:11px;font-weight:normal;color:#404040;white-space:nowrap;letter-spacing:-0.171px">Construction</div>
<svg style="left:41.2px;top:366px" width="8" height="10" ><use href="#exp" width="8" height="10"/></svg>
<div class="row abs" style="left:62px;top:361px;width:240px">
<div class="strip5 abs" style="background:#e6e6fa"></div>
</div>
<svg style="left:70.3px;top:363px" width="14" height="18" ><use href="#bulbOff" width="14" height="18"/></svg>
<svg style="left:95.4px;top:362.4px" width="18" height="18" ><use href="#cube" width="18" height="18"/></svg>
<div style="position:absolute;left:125px;top:366.29px;font-family:'DejaVu Sans','Liberation Sans',sans-serif;font-size:11px;line-height:11px;font-weight:normal;color:#404040;white-space:nowrap;letter-spacing:-0.133px">MK7 Fillament Gear for 8 mm...</div>
<svg style="left:41.2px;top:390px" width="8" height="10" ><use href="#exp" width="8" height="10"/></svg>
<div class="row abs" style="left:62px;top:385px;width:204px">
<div class="strip5 abs" style="background:#e0e0e0"></div>
</div>
<svg style="left:70.3px;top:387px" width="14" height="18" ><use href="#bulbOff" width="14" height="18"/></svg>
<svg style="left:95.4px;top:386.4px" width="18" height="18" ><use href="#cube" width="18" height="18"/></svg>
<svg style="left:104px;top:393.5px" width="7.5" height="9.5" ><use href="#pin" width="7.5" height="9.5"/></svg>
<div style="position:absolute;left:125px;top:390.29px;font-family:'DejaVu Sans','Liberation Sans',sans-serif;font-size:11px;line-height:11px;font-weight:normal;color:#404040;white-space:nowrap;letter-spacing:-0.291px">NEMA 17 5 GearBox v1:1</div>
<svg style="left:41.2px;top:414px" width="8" height="10" ><use href="#exp" width="8" height="10"/></svg>
<div class="row abs" style="left:62px;top:409px;width:148px">
<div class="strip5 abs" style="background:#9370db"></div>
</div>
<svg style="left:70.3px;top:411px" width="14" height="18" ><use href="#bulbOff" width="14" height="18"/></svg>
<svg style="left:95.4px;top:410.4px" width="18" height="18" ><use href="#cube" width="18" height="18"/></svg>
<div style="position:absolute;left:125px;top:414.29px;font-family:'DejaVu Sans','Liberation Sans',sans-serif;font-size:11px;line-height:11px;font-weight:normal;color:#404040;white-space:nowrap;letter-spacing:-0.053px">NEMA-17 v4:1</div>
<svg style="left:41.2px;top:438px" width="8" height="10" ><use href="#exp" width="8" height="10"/></svg>
<div class="row abs" style="left:62px;top:433px;width:232px">
<div class="strip5 abs" style="background:#ffa07a"></div>
</div>
<svg style="left:70.3px;top:435px" width="14" height="18" ><use href="#bulbOff" width="14" height="18"/></svg>
<svg style="left:95.4px;top:434.4px" width="18" height="18" ><use href="#cube" width="18" height="18"/></svg>
<div style="position:absolute;left:125px;top:438.29px;font-family:'DejaVu Sans','Liberation Sans',sans-serif;font-size:11px;line-height:11px;font-weight:normal;color:#404040;white-space:nowrap;letter-spacing:-0.086px">ISO 4762 - M2.5 x 10ISO v1:1</div>
<svg style="left:41.2px;top:462px" width="8" height="10" ><use href="#exp" width="8" height="10"/></svg>
<div class="row abs" style="left:62px;top:457px;width:232px">
<div class="strip5 abs" style="background:#ffa07a"></div>
</div>
<svg style="left:70.3px;top:459px" width="14" height="18" ><use href="#bulbOff" width="14" height="18"/></svg>
<svg style="left:95.4px;top:458.4px" width="18" height="18" ><use href="#cube" width="18" height="18"/></svg>
<div style="position:absolute;left:125px;top:462.29px;font-family:'DejaVu Sans','Liberation Sans',sans-serif;font-size:11px;line-height:11px;font-weight:normal;color:#404040;white-space:nowrap;letter-spacing:-0.086px">ISO 4762 - M2.5 x 10ISO v1:2</div>
<svg style="left:41.2px;top:486px" width="8" height="10" ><use href="#exp" width="8" height="10"/></svg>
<div class="row abs" style="left:62px;top:481px;width:232px">
<div class="strip5 abs" style="background:#ffa07a"></div>
</div>
<svg style="left:70.3px;top:483px" width="14" height="18" ><use href="#bulbOff" width="14" height="18"/></svg>
<svg style="left:95.4px;top:482.4px" width="18" height="18" ><use href="#cube" width="18" height="18"/></svg>
<div style="position:absolute;left:125px;top:486.29px;font-family:'DejaVu Sans','Liberation Sans',sans-serif;font-size:11px;line-height:11px;font-weight:normal;color:#404040;white-space:nowrap;letter-spacing:-0.086px">ISO 4762 - M2.5 x 10ISO v1:3</div>
<svg style="left:41.2px;top:510px" width="8" height="10" ><use href="#exp" width="8" height="10"/></svg>
<div class="row abs" style="left:62px;top:505px;width:232px">
<div class="strip5 abs" style="background:#ffa07a"></div>
</div>
<svg style="left:70.3px;top:507px" width="14" height="18" ><use href="#bulbOff" width="14" height="18"/></svg>
<svg style="left:95.4px;top:506.4px" width="18" height="18" ><use href="#cube" width="18" height="18"/></svg>
<div style="position:absolute;left:125px;top:510.29px;font-family:'DejaVu Sans','Liberation Sans',sans-serif;font-size:11px;line-height:11px;font-weight:normal;color:#404040;white-space:nowrap;letter-spacing:-0.086px">ISO 4762 - M2.5 x 10ISO v1:4</div>
<svg style="left:41.2px;top:534px" width="8" height="10" ><use href="#exp" width="8" height="10"/></svg>
<div class="row abs" style="left:62px;top:529px;width:156px">
<div class="strip5 abs" style="background:#cd5c5c"></div>
</div>
<svg style="left:70.3px;top:531px" width="14" height="18" ><use href="#bulbOn" width="14" height="18"/></svg>
<svg style="left:95.4px;top:530.4px" width="18" height="18" ><use href="#cube" width="18" height="18"/></svg>
<div style="position:absolute;left:125px;top:534.29px;font-family:'DejaVu Sans','Liberation Sans',sans-serif;font-size:11px;line-height:11px;font-weight:normal;color:#404040;white-space:nowrap;letter-spacing:-0.369px">Extruder Base:1</div>
<svg style="left:93px;top:544px" width="122" height="4"><path d="M0 3 H121" stroke="#4a6aa8" stroke-width="2.6" stroke-dasharray="3 2.2" transform="skewX(-35)" /></svg>
<svg style="left:41.2px;top:558px" width="8" height="10" ><use href="#exp" width="8" height="10"/></svg>
<div class="row abs" style="left:62px;top:553px;width:200px">
<div class="strip5 abs" style="background:#daa520"></div>
</div>
<svg style="left:70.3px;top:555px" width="14" height="18" ><use href="#bulbOn" width="14" height="18"/></svg>
<svg style="left:95.4px;top:554.4px" width="18" height="18" ><use href="#cube" width="18" height="18"/></svg>
<div style="position:absolute;left:125px;top:558.29px;font-family:'DejaVu Sans','Liberation Sans',sans-serif;font-size:11px;line-height:11px;font-weight:normal;color:#404040;white-space:nowrap;letter-spacing:-0.285px">Extruder Bearing Pivot:1</div>
<svg style="left:93px;top:568px" width="166" height="4"><path d="M0 3 H165" stroke="#4a6aa8" stroke-width="2.6" stroke-dasharray="3 2.2" transform="skewX(-35)" /></svg>
<svg style="left:41.2px;top:582px" width="8" height="10" ><use href="#exp" width="8" height="10"/></svg>
<div class="row abs" style="left:62px;top:577px;width:240px">
<div class="strip5 abs" style="background:#afeeee"></div>
</div>
<svg style="left:70.3px;top:579px" width="14" height="18" ><use href="#bulbOn" width="14" height="18"/></svg>
<svg style="left:95.4px;top:578.4px" width="18" height="18" ><use href="#cube" width="18" height="18"/></svg>
<div style="position:absolute;left:125px;top:582.29px;font-family:'DejaVu Sans','Liberation Sans',sans-serif;font-size:11px;line-height:11px;font-weight:normal;color:#404040;white-space:nowrap;letter-spacing:-0.068px">HI_Riku_SKFbis17_625-2Z-SK...</div>
<svg style="left:41.2px;top:606px" width="8" height="10" ><use href="#exp" width="8" height="10"/></svg>
<div class="row abs" style="left:62px;top:601px;width:228px">
<div class="strip5 abs" style="background:#9acd32"></div>
</div>
<svg style="left:70.3px;top:603px" width="14" height="18" ><use href="#bulbOn" width="14" height="18"/></svg>
<svg style="left:95.4px;top:602.4px" width="18" height="18" ><use href="#asm" width="18" height="18"/></svg>
<div style="position:absolute;left:125px;top:606.29px;font-family:'DejaVu Sans','Liberation Sans',sans-serif;font-size:11px;line-height:11px;font-weight:normal;color:#404040;white-space:nowrap;letter-spacing:-0.214px">Makergear V3b Hotend v18:1</div>
<svg style="left:41.2px;top:630px" width="8" height="10" ><use href="#exp" width="8" height="10"/></svg>
<div class="row abs" style="left:62px;top:625px;width:208px">
<div class="strip5 abs" style="background:#4682b4"></div>
</div>
<svg style="left:70.3px;top:627px" width="14" height="18" ><use href="#bulbOff" width="14" height="18"/></svg>
<svg style="left:95.4px;top:626.4px" width="18" height="18" ><use href="#cube" width="18" height="18"/></svg>
<div style="position:absolute;left:125px;top:630.29px;font-family:'DejaVu Sans','Liberation Sans',sans-serif;font-size:11px;line-height:11px;font-weight:normal;color:#404040;white-space:nowrap;letter-spacing:-0.309px">8 mm Linear Bearing v2:1</div>
<svg style="left:41.2px;top:654px" width="8" height="10" ><use href="#exp" width="8" height="10"/></svg>
<div class="row abs" style="left:62px;top:649px;width:208px">
<div class="strip5 abs" style="background:#4682b4"></div>
</div>
<svg style="left:70.3px;top:651px" width="14" height="18" ><use href="#bulbOn" width="14" height="18"/></svg>
<svg style="left:95.4px;top:650.4px" width="18" height="18" ><use href="#cube" width="18" height="18"/></svg>
<div style="position:absolute;left:125px;top:654.29px;font-family:'DejaVu Sans','Liberation Sans',sans-serif;font-size:11px;line-height:11px;font-weight:normal;color:#404040;white-space:nowrap;letter-spacing:-0.309px">8 mm Linear Bearing v2:2</div>
<svg style="left:41.2px;top:678px" width="8" height="10" ><use href="#exp" width="8" height="10"/></svg>
<div class="row abs" style="left:62px;top:673px;width:208px">
<div class="strip5 abs" style="background:#4682b4"></div>
</div>
<svg style="left:70.3px;top:675px" width="14" height="18" ><use href="#bulbOn" width="14" height="18"/></svg>
<svg style="left:95.4px;top:674.4px" width="18" height="18" ><use href="#cube" width="18" height="18"/></svg>
<div style="position:absolute;left:125px;top:678.29px;font-family:'DejaVu Sans','Liberation Sans',sans-serif;font-size:11px;line-height:11px;font-weight:normal;color:#404040;white-space:nowrap;letter-spacing:-0.309px">8 mm Linear Bearing v2:3</div>
<svg style="left:41.2px;top:702px" width="8" height="10" ><use href="#exp" width="8" height="10"/></svg>
<div class="row abs" style="left:62px;top:697px;width:164px">
<div class="strip5 abs" style="background:#006400"></div>
</div>
<svg style="left:70.3px;top:699px" width="14" height="18" ><use href="#bulbOff" width="14" height="18"/></svg>
<svg style="left:95.4px;top:698.4px" width="18" height="18" ><use href="#cube" width="18" height="18"/></svg>
<div style="position:absolute;left:125px;top:702.29px;font-family:'DejaVu Sans','Liberation Sans',sans-serif;font-size:11px;line-height:11px;font-weight:normal;color:#404040;white-space:nowrap;letter-spacing:-0.205px">fan4x4x1cm v1:1</div>
<svg style="left:41.2px;top:726px" width="8" height="10" ><use href="#exp" width="8" height="10"/></svg>
<div class="row abs" style="left:62px;top:721px;width:208px">
<div class="strip5 abs" style="background:#e6e6fa"></div>
</div>
<svg style="left:70.3px;top:723px" width="14" height="18" ><use href="#bulbOff" width="14" height="18"/></svg>
<svg style="left:95.4px;top:722.4px" width="18" height="18" ><use href="#cube" width="18" height="18"/></svg>
<div style="position:absolute;left:125px;top:726.29px;font-family:'DejaVu Sans','Liberation Sans',sans-serif;font-size:11px;line-height:11px;font-weight:normal;color:#404040;white-space:nowrap;letter-spacing:-0.160px">40X40X20 Axial Fan v1:1</div>
<svg style="left:41.2px;top:750px" width="8" height="10" ><use href="#exp" width="8" height="10"/></svg>
<div class="row abs" style="left:62px;top:745px;width:232px">
<div class="strip5 abs" style="background:#ffa07a"></div>
</div>
<svg style="left:70.3px;top:747px" width="14" height="18" ><use href="#bulbOff" width="14" height="18"/></svg>
<svg style="left:95.4px;top:746.4px" width="18" height="18" ><use href="#cube" width="18" height="18"/></svg>
<div style="position:absolute;left:125px;top:750.29px;font-family:'DejaVu Sans','Liberation Sans',sans-serif;font-size:11px;line-height:11px;font-weight:normal;color:#404040;white-space:nowrap;letter-spacing:-0.086px">ISO 4762 - M2.5 x 10ISO v1:5</div>
<svg style="left:41.2px;top:774px" width="8" height="10" ><use href="#exp" width="8" height="10"/></svg>
<div class="row abs" style="left:62px;top:769px;width:232px">
<div class="strip5 abs" style="background:#ffa07a"></div>
</div>
<svg style="left:70.3px;top:771px" width="14" height="18" ><use href="#bulbOff" width="14" height="18"/></svg>
<svg style="left:95.4px;top:770.4px" width="18" height="18" ><use href="#cube" width="18" height="18"/></svg>
<div style="position:absolute;left:125px;top:774.29px;font-family:'DejaVu Sans','Liberation Sans',sans-serif;font-size:11px;line-height:11px;font-weight:normal;color:#404040;white-space:nowrap;letter-spacing:-0.086px">ISO 4762 - M2.5 x 10ISO v1:6</div>
<div class="ph abs" style="top:821px;height:24.5px"><div style="position:absolute;left:26.4px;top:6.02px;font-family:'DejaVu Sans','Liberation Sans',sans-serif;font-size:10.5px;line-height:10.5px;font-weight:normal;color:#555;white-space:nowrap;letter-spacing:0.024px">ACTIVITY FEED</div>
<svg style="left:277px;top:6px" width="10" height="10"><circle cx="5" cy="5" r="4.6" fill="#222"/><rect x="2.2" y="4.3" width="5.6" height="1.4" fill="#eee"/><rect x="4.3" y="2.2" width="1.4" height="5.6" fill="#eee"/></svg>
<div class="abs" style="left:294px;top:5px;width:1px;height:12px;background:#777;box-shadow:2px 2px 0 0 #aaa"></div>
</div>
<svg style="left:0;top:0" width="1600" height="900" viewBox="0 0 1600 900">
<defs>
 <linearGradient id="mCyl" x1="0" y1="0" x2="1" y2="0"><stop offset="0" stop-color="#2c5e2c"/><stop offset="0.22" stop-color="#2f662f"/><stop offset="0.6" stop-color="#265426"/><stop offset="1" stop-color="#1f471f"/></linearGradient>
 <linearGradient id="mRod" x1="0" y1="0" x2="1" y2="0"><stop offset="0" stop-color="#9c9c9c"/><stop offset="0.4" stop-color="#c8c8c8"/><stop offset="1" stop-color="#a4a4a4"/></linearGradient>
 <linearGradient id="mGreenCyl" x1="0" y1="0" x2="1" y2="0"><stop offset="0" stop-color="#7eb21c"/><stop offset="0.45" stop-color="#98d02c"/><stop offset="1" stop-color="#6c9c18"/></linearGradient>
 <linearGradient id="mGoldTop" x1="0" y1="0" x2="0.25" y2="1"><stop offset="0" stop-color="#d9a632"/><stop offset="0.3" stop-color="#f4cc68"/><stop offset="0.5" stop-color="#e2ae3a"/><stop offset="1" stop-color="#dba836"/></linearGradient>
 <linearGradient id="mTurq" x1="0" y1="0" x2="1" y2="0"><stop offset="0" stop-color="#6cb8b0"/><stop offset="0.550" stop-color="#a4e8e0"/><stop offset="1" stop-color="#84ccc4"/></linearGradient>
 <linearGradient id="mBlueF" x1="0" y1="0" x2="1" y2="0.3"><stop offset="0" stop-color="#5058b8"/><stop offset="0.45" stop-color="#6c76d8"/><stop offset="1" stop-color="#4c54b4"/></linearGradient>
 <linearGradient id="mCone" x1="0" y1="0" x2="1" y2="0"><stop offset="0" stop-color="#8cc02c"/><stop offset="0.45" stop-color="#7aac24"/><stop offset="1" stop-color="#4c7c14"/></linearGradient>
 <linearGradient id="mRedFil" x1="0" y1="0" x2="0" y2="1"><stop offset="0" stop-color="#a6534d"/><stop offset="1" stop-color="#b55c55"/></linearGradient>
 <linearGradient id="mArmTop" x1="0" y1="0" x2="0.35" y2="1"><stop offset="0" stop-color="#dba836"/><stop offset="0.45" stop-color="#e6b84c"/><stop offset="0.7" stop-color="#fae8b0"/><stop offset="1" stop-color="#e8ba50"/></linearGradient>
 <linearGradient id="mHole" x1="0" y1="0" x2="0.300" y2="1"><stop offset="0" stop-color="#c89a2c"/><stop offset="0.600" stop-color="#e2b040"/><stop offset="0.900" stop-color="#f8d070"/><stop offset="1" stop-color="#e6b84a"/></linearGradient>
 <linearGradient id="mNotch" x1="0" y1="0" x2="1" y2="1"><stop offset="0" stop-color="#a8a8a0"/><stop offset="1" stop-color="#dcdcd6"/></linearGradient>
 <clipPath id="winClip"><path d="M659.500 243 Q660 235 664 231 Q671 228 674 226 Q678 223 679 220 Q680 212 684 209 Q688 204.500 693 204.500 Q698 205 703 207.500 L803 236 Q814 241 814 255 V398 Q814 411 803 413.500 Q800 414 796 413 L676 377.500 Q660.500 372 659.500 356 Z"/></clipPath>
 <linearGradient id="mPlate" gradientUnits="userSpaceOnUse" x1="635" y1="180" x2="840" y2="420"><stop offset="0" stop-color="#dbdbd4"/><stop offset="0.500" stop-color="#d3d3cb"/><stop offset="1" stop-color="#c9c9c1"/></linearGradient>
 <linearGradient id="mSide" gradientUnits="userSpaceOnUse" x1="850" y1="240" x2="850" y2="480"><stop offset="0" stop-color="#bdbdb7"/><stop offset="1" stop-color="#c9c9c2"/></linearGradient>
 <clipPath id="sideClip"><path d="M860.500 293 L866 293.500 L931 281 L934.500 276 V215 L948 215 V399 L902.500 410 L860.500 421 Z"/></clipPath>
</defs>
<g stroke-linejoin="round">
<!-- shadow -->
<path d="M636 749 L677.5 734 L700 728.500 L711 731.500 L732.500 725.500 L810 722.500 L984 772.500 L840 808 L734 779 L719 782.500 L644 761 L657.500 756 Z" fill="#c9c9c9"/>

<!-- nozzle -->
<path d="M733.500 723 L755 726.500 L780 728.500 L801.300 723.500 L812 716 L769.300 755.800 Z" fill="url(#mCone)" stroke="#2a3c10" stroke-width="0.700"/>
<path d="M724 665 L754.700 668 V727 L733.500 724 L724 716 Z" fill="#8cbe2c" stroke="#22300c" stroke-width="0.700"/>
<path d="M754.700 668 L801.300 660 V724 Q780 731 754.700 727 Z" fill="#67981d" stroke="#22300c" stroke-width="0.700"/>
<path d="M801.300 660 L814.700 655 V710.700 L812 716 L801.300 724 Z" fill="#82b23a" stroke="#22300c" stroke-width="0.700"/>
<path d="M782 681 L790.700 681.300 L801.300 685.300 L814.700 674.700 L814.700 668 L800 672 Z" fill="#9ccc3c" stroke="#22300c" stroke-width="0.500"/>
<!-- purple block -->
<path d="M649.500 594 L781 562 L838.500 577.750 L708 610.800 Z" fill="#9382ba" stroke="#1c1030" stroke-width="0.7"/>
<path d="M708 610.800 L838.500 577.750 L848.250 594.250 L718.500 626.500 Z" fill="#8b66c8" stroke="#1c1030" stroke-width="0.7"/>
<path d="M718.500 626.500 L848.250 594.250 V654.500 L822.700 661 L812 673 L782.700 680.500 L773 672 L764 676.500 L718.500 686.500 Z" fill="#553c7b" stroke="#1c1030" stroke-width="0.700"/>
<path d="M718.500 686.500 L764 676.500 L773 672 L782.700 680.500 L770 686.500 L707.500 696.500 Z" fill="#6a5496" stroke="#1c1030" stroke-width="0.700"/>
<path d="M812 673 L822.700 661 L848.250 654.500 L838 664 Z" fill="#6a5496" stroke="#1c1030" stroke-width="0.700"/>
<path d="M639.300 604.800 L649.500 594 L708 610.800 L718.500 626.500 V686.500 L707.500 696.500 L646.500 678 L639.300 665.500 Z" fill="#7056a6" stroke="#1c1030" stroke-width="0.7"/>
<ellipse cx="658.500" cy="624" rx="14.600" ry="21.400" transform="rotate(-7 658.500 624)" fill="#b9524c" stroke="#2a1010" stroke-width="0.7"/>
<ellipse cx="658.500" cy="662.800" rx="7.200" ry="10.600" transform="rotate(-7 658.500 662.800)" fill="#d79a16" stroke="#2a1a08" stroke-width="0.7"/>
<ellipse cx="743.500" cy="634.300" rx="11.700" ry="16.200" transform="rotate(-4 743.500 634.300)" fill="#d9d9d9" stroke="#1c1030" stroke-width="0.8"/>
<path d="M734 626 Q732 634 735.500 643" fill="none" stroke="#f0a070" stroke-width="2.400"/>
<g fill="none" stroke="#9a9a9a" stroke-width="0.6"><path d="M738 624 Q746 618 753 626"/><path d="M737 630 Q746 623 754.500 632"/><path d="M737.500 636 Q746 629 755 638"/><path d="M739 642 Q747 635 754 644"/></g>

<!-- threaded rod -->
<path d="M751.500 560 H786.750 V585 Q769 592 751.500 585 Z" fill="url(#mRod)"/>
<g stroke="#8a8a8a" stroke-width="0.7" fill="none"><path d="M751.500 573 Q769 577 786.750 573"/><path d="M751.500 575.600 Q769 579.600 786.750 575.600"/><path d="M751.500 578.200 Q769 582.200 786.750 578.200"/><path d="M751.500 580.800 Q769 584.800 786.750 580.800"/><path d="M751.500 583.400 Q769 587.400 786.750 583.400"/></g>
<!-- dark green cylinder -->
<path d="M726.500 460 H813 V559 Q812 566 795 569 Q770 572.500 745 569 Q727 566 726.500 559 Z" fill="url(#mCyl)" stroke="#0c200c" stroke-width="0.6"/>

<!-- ===== red body ===== -->
<!-- right dark face (with notch) + bottom fillet -->
<path d="M947.750 220.600 L984.300 211 V432.400 L902.500 452 V410 L947.500 399 Z" fill="#a3514b"/>
<path d="M902.500 452 L984.300 432.400 V443 Q982 455 970 459 L902.500 474 Z" fill="url(#mRedFil)"/>
<!-- notch interior (back wall) -->
<path d="M861 236 L947.500 215 V399 L902 412 L861 421 Z" fill="#c4625d"/>
<!-- main front face -->
<path d="M768.500 133.500 L923 178 Q932 184 938.750 192.500 Q945.500 205 947.750 220.600 V300 L933 300 V202 Q932 192 927.500 189 L905 184.600 L889 177 L820 194 Q806 192.500 798 189 Q791 184 784.500 176 L755 135.500 Z" fill="#c4625d"/>
<!-- fillet bands between gold and red -->
<path d="M755 135.500 Q762 134 768.500 133.500 Q784 150 789 165 Q792 174 791.500 183 Q787 180 784.500 176 Q780 164 775 157 Q766 144 755 135.500 Z" fill="#bb5a54"/>
<path d="M762 134.300 L768.500 133.500 Q784 150 789 165 Q791.500 172 791.500 179 Q786 160 776 148 Q770 140 762 134.300 Z" fill="#dc7e76"/>
<path d="M784.500 176 Q791 184 798 189" fill="none" stroke="#f0b0a8" stroke-width="1.200"/>
<!-- pink top -->
<path d="M768.500 133.500 L797 124 Q800.500 123.300 804 124.200 L962.400 170 L923 178 Z" fill="#f3c2ba"/>
<path d="M750 136 L768.500 132.800 L797 123.600" fill="none" stroke="#f6d0c8" stroke-width="1.400"/>
<!-- blue fillet -->
<path d="M923 178 L962.400 170 Q972 174 977 181 Q982 190 983.750 201.500 L984.300 211 L947.750 220.600 Q945.500 205 938.750 192.500 Q932 184 923 178 Z" fill="url(#mBlueF)"/>
<path d="M947.750 220.600 L984.300 211" stroke="#eab8b4" stroke-width="1.200" fill="none"/>
<path d="M923 178 Q932 184 938.750 192.500 Q945.500 205 947.750 220.600" stroke="#f0b8b0" stroke-width="1" fill="none"/>

<!-- gold top-left bar -->
<path d="M678 154.500 Q679 152.600 682 152 L718 145 L755 135.500 Q766 144 775 157 Q780 164 784.500 176 L786 178.500 L717 165 Z" fill="url(#mGoldTop)"/>
<path d="M717 165 L769 150.500 Q776 158 780 166 L785.500 178 L770 180 Z" fill="#dba836"/>
<path d="M700 158.500 L763 142 L765.500 144.500 L704 160.800 Z" fill="#f8de98" opacity="0.900"/>
<path d="M679 152.800 Q686 150.500 692 152.500 Q698 156 702 160.500 L678 154.500 Z" fill="#d29f30"/>

<!-- right gold arm -->
<path d="M820 194 L889 177 L905 184.600 L927.500 189 Q931.500 191.500 932.500 197 L871 212.500 Q868 206 862.500 204 Z" fill="url(#mArmTop)"/>
<path d="M868 207 Q871 211 871 216.700 L933 202 Q933 195 930 191.500 Z" fill="#e2b242"/>
<path d="M871 216.700 L933 202 L934 272 Q934 276 930 277 L871 288 Z" fill="#c4962c"/>
<path d="M845.400 202.600 Q854 204 862.500 204 Q869 207 871 216.700 V288 L864 293 L860.500 293 V242 Q859.500 228 856.600 220.600 Q852 209 845.400 202.600 Z" fill="#dbaa36"/>
<path d="M871 288 L930 277 L931 281 L866 293.500 L864 293 Z" fill="#e6b84a"/>

<!-- green cylinders (side opening) -->
<g clip-path="url(#sideClip)">
 <path d="M861 236 H948 V399 L861 421 Z" fill="#c4625d"/>
 <path d="M861 325 Q880 328 898 322 Q894 339 892 355 Q893 362 898 367 L884 369 L861 361 Z" fill="#f3f3f3"/>
 <path d="M861 361 L884 369 L898 367 Q902 370 904 375 Q909 382 911 389 L861 392 Z" fill="#eaa49c"/>
 <path d="M861 372 Q880 376 904 375" fill="none" stroke="#f8d0c8" stroke-width="1.500"/>
 <path d="M861 290 L909 280 V315 Q886 329 861 324.500 Z" fill="url(#mGreenCyl)" stroke="#2c4410" stroke-width="0.500"/>
 <path d="M909 389 L913 389 L947.500 399 L902.500 410 L890 411 Z" fill="#e9a9a2"/>
 <path d="M861 412 L902.500 410 L861 421 Z" fill="#e2e2dc"/>
 <path d="M859 388.500 V402 Q884 418 909.500 402 V388.500 Q884 406 859 388.500 Z" fill="url(#mGreenCyl)" stroke="#2c4410" stroke-width="0.500"/>
 <ellipse cx="884.500" cy="388.500" rx="25" ry="9.200" fill="#9ccc30" stroke="#2c4410" stroke-width="0.500"/>
 <ellipse cx="883" cy="388" rx="19.500" ry="6.800" fill="#86b626" stroke="#2c4410" stroke-width="0.500"/>
 <path d="M863.500 388 Q883 379 902.500 388 Q883 384 863.500 388 Z" fill="#a4d838"/>
</g>

<!-- ===== window interior ===== -->
<g clip-path="url(#winClip)">
 <rect x="655" y="200" width="165" height="220" fill="#f4f4f4"/>
 <!-- red interior -->
 <path d="M792 268 L815 272 V362 L783 352 L755 344 Q768 334 775 315 L778 306 Z" fill="#c4625d"/>
 <path d="M778 306 L792 276 L815 281" fill="none" stroke="#2a1010" stroke-width="0.600"/>
 <path d="M792 276 Q793 296 797 312 Q798 318 797 322 L811 318.500 Q815 318 815 322" fill="none" stroke="#2a1010" stroke-width="0.600"/>
 <path d="M797 322 Q798 332 792 338 Q786 342 785.500 350 L800 356 L815 360 V322 Q810 318 797 322 Z" fill="#cf6d67" stroke="#2a1010" stroke-width="0.500"/>
 <path d="M806 342 Q803 350 808 358 L815 360 V338 Q809 337 806 342 Z" fill="#c4625d" stroke="#2a1010" stroke-width="0.500"/>
 <!-- pink strip and floor -->
 <path d="M703 352 L751 344 L783 352 L815 362 V372 L725 359 Z" fill="#f3b5ad"/>
 <path d="M680 348.500 L703 352 L725 359 L815 381 V414 L670 375 L662 356 Z" fill="#e7e7e1"/>
 <path d="M680 352 L703 352 L686 356 Z" fill="#f4f4f4"/>
 <ellipse cx="764" cy="372.600" rx="52" ry="15" fill="#9dbb99" stroke="#2c3c2c" stroke-width="0.500"/>
 <ellipse cx="767" cy="372" rx="34" ry="9.600" fill="#e9e9ee" stroke="#444" stroke-width="0.500"/>
 <ellipse cx="767.500" cy="372" rx="19" ry="5.400" fill="#e4e4e4" stroke="#666" stroke-width="0.500"/>
 <ellipse cx="768" cy="372" rx="6" ry="1.800" fill="#d8d8d8" stroke="#666" stroke-width="0.500"/>
 <!-- lever right arm thickness (behind bearing) -->
 <path d="M774 262 L794 268 L792.500 276 L778 307 Z" fill="#c4962c" stroke="#2a1c06" stroke-width="0.500"/>
 <path d="M731 284 L737 272 L750 262 L762 261 L777 266 L779 292 L745 292 Z" fill="#c4962c"/>
 <!-- bearing -->
 <path d="M751 266 Q762 262 770 268 Q775 274 777.500 295 Q777 318 768 334 Q760 343 740 349 L720 349 Q710 347 703 342 Q696 337 690 328 L735 300 Z" fill="url(#mTurq)" stroke="#2c5c58" stroke-width="0.600"/>
 <path d="M745.500 285 Q749 290 750 310 Q749 320 745 326 Q741 334 735 339 Q728 344 720 345 Q712 344 705 340 L697 334 L711 330 L724 326 L731 317.500 L739 300 Z" fill="#171717"/>
 <path d="M748 272 Q753 282 754 300 Q754 318 748 330 Q742 340 730 346 Q720 349 710 346" fill="none" stroke="#3c7c76" stroke-width="0.700"/>
 <path d="M750 270 Q756 282 757 300 Q757 320 750 332 Q744 342 731 348" fill="none" stroke="#3c7c76" stroke-width="0.600"/>
 <!-- gold lever -->
 <path d="M680.500 200 H815 V279 L757 265 Q752 263.500 749 264.500 Q741 267 737 275 Q734 279 733 280 L715 324 Q712 330 709 331 Q704 333.500 700 333.500 Q693 333 688 330 Q683 326 680.500 322 Z" fill="#dcaa38" stroke="#2a1c06" stroke-width="0.700"/>
 <path d="M733 280 L749 273 L745.500 285 L739 300 L731 317.500 L724 326 L711 330 Q713 328 715 324 Z" fill="#c4962c" stroke="#2a1c06" stroke-width="0.600"/>
 <path d="M711 330 L724 326 L718 332 Q712 334 706 332.500 Z" fill="#d4a434" stroke="#2a1c06" stroke-width="0.500"/>
 <ellipse cx="694.500" cy="298" rx="12.300" ry="18" transform="rotate(-9 694.500 298)" fill="url(#mHole)" stroke="#2a1c06" stroke-width="0.700"/>
 <ellipse cx="702.500" cy="296" rx="4.300" ry="11.400" transform="rotate(-9 702.500 296)" fill="#8cd8d0" stroke="#2c5c58" stroke-width="0.600"/>
 <path d="M699.500 289 Q703 296 704.500 306" fill="none" stroke="#3c7c76" stroke-width="0.600"/>
 <path d="M736 275 Q738 270 741 268 Q746 264.500 751 264 L756 265.500 L750 272 Q743 275 737 276 Z" fill="#3f7ccc"/>
 <path d="M783.500 263 Q787 256 796 253 Q801 252.500 803.500 253 Q799 259 792 262 Q787 263.500 783.500 263 Z" fill="#4b82cc" stroke="#f6dc9c" stroke-width="0.800"/>
 <path d="M760 262.500 Q768 260 773 259.500" fill="none" stroke="#f6dc9c" stroke-width="0.900"/>
</g>

<!-- ===== white plate ===== -->
<!-- top strip -->
<path d="M654 159.800 Q658 157.500 663 157 L678 154.500 L822 193.500 L845.400 202.600 Q852 209 856.600 220.600 Q859.500 228 860.500 242 L839 246.500 Q839 230 834 220.600 Q828 209 815 204 Z" fill="#eaeae3"/>
<!-- side face -->
<path d="M839 246.500 L860.500 241 V421 L902.500 410 V470 L839.500 488 Z" fill="url(#mSide)"/>
<path d="M839.500 467 L902.500 452 V474 L888 478.500 L840 491.500 Q826 497 820 495 Q836 490 839.500 473 Z" fill="#d2d2cc"/>
<!-- inner walls of window -->
<path d="M659.500 244.500 L680 240.500 V348.500 L659.500 353 Z" fill="#d4d4ce"/>
<path d="M659.500 244.500 Q660 235 664 231 Q671 228 674 226 Q678 223 679 220 L682 232 L680 240.500 Z" fill="url(#mNotch)"/>
<path d="M659.500 353 L680 348.500 Q682 360 690 365 L695 369 L676 377.500 Q660.500 372 659.500 356 Z" fill="#e9e9e3"/>
<path d="M679 219 Q680 212 684 209 Q688 204.500 693 204.500 Q698 205 703 207.500 Q700 214 694 219 Q688 224 682 226 Z" fill="#8f9db4"/>
<!-- front face with window hole -->
<path fill-rule="evenodd" d="M635.200 181 Q636 166 654 159.800 L815 204 Q828 209 834 220.600 Q839 230 839 246.500 L839.500 473 Q837 492 820 495 Q816 495.500 812 494 L662 450.600 Q649 446 642 434 Q636 424 635.300 411 Z M659.500 243 Q660 235 664 231 Q671 228 674 226 Q678 223 679 220 Q680 212 684 209 Q688 204.500 693 204.500 Q698 205 703 207.500 L803 236 Q814 241 814 255 V398 Q814 411 803 413.500 Q800 414 796 413 L676 377.500 Q660.500 372 659.500 356 Z" fill="url(#mPlate)" stroke="#222" stroke-width="0.800"/>
<!-- sketch overlay -->
<path d="M677.600 212.700 L724.400 200 L730.600 203.700 L740.200 208.600 L747.100 209.300 L749.200 215.500 L748.500 221 L745.100 239.600 L727.900 245.100 L729.200 225.100 L702.400 232 L699 251.300 L683.800 256.800 L681 252.600 L681.700 236.100 L683.800 227.900 L680.300 218.200 Z" fill="#6496f0" fill-opacity="0.300" stroke="#f4ecd0" stroke-width="0.900" stroke-opacity="0.900"/>
<path d="M791.200 223 L807.700 217.500 L813.200 211.300 L824.300 207.900 L847.700 202.400 L875.200 195.500 L872.500 201 L847.700 210 L831.200 215.500 L807.700 221.700 L799.500 223.700 Z" fill="#6496f0" fill-opacity="0.300" stroke="#f2f6fc" stroke-width="0.800" stroke-opacity="0.800"/>
<path d="M791.200 223 L807.700 217.500 L806 221 L799.500 223.700 Z" fill="#4c8ae0"/>
<path d="M808 250 Q812 247 818 247.500 Q814 250.500 808 250 Z" fill="#b4c8e4"/>
<path d="M723.700 192.700 L748.500 186.500 L785.700 177.600 L802.200 192.700 L784.300 198.200 L766.400 192.700 Q760 193 758.200 194.100 Q755 196 755.400 197.500 Q756 200.500 759.500 202.400 L761.600 203 L741.600 208.600 L730.600 203.700 Z" fill="#4c90ea" stroke="#eef4fc" stroke-width="0.800"/>
<path d="M774.700 181 L785.700 177.600 L791 183.800 L782 186.500 Z" fill="#6a8cc0"/>
<path d="M748.500 186.500 L784.300 198.200" stroke="#2c5cb0" stroke-width="0.600" fill="none"/>
<!-- screws & holes -->
<ellipse cx="650.750" cy="410" rx="15.200" ry="21.500" transform="rotate(-13 650.750 410)" fill="#e4e4dd" stroke="#222" stroke-width="0.700"/>
<ellipse cx="653.750" cy="408.750" rx="11.700" ry="19.200" transform="rotate(-13 653.750 408.750)" fill="#f1a27c" stroke="#3a1c10" stroke-width="0.700"/>
<path d="M647.500 406 L651.500 400 L656 401.500 L660.500 409 L656.500 416.500 L651.500 415.500 Z" fill="#ef9c74" stroke="#4a2414" stroke-width="0.600"/>
<path d="M647.500 406 L651.500 400 L656 401.500 L652.500 406.500 Z" fill="#c8764c"/>
<path d="M652.500 406.500 L656.500 416.500 M652.500 406.500 L647.500 406" fill="none" stroke="#4a2414" stroke-width="0.500"/>
<ellipse cx="761.250" cy="441.500" rx="14.700" ry="21.500" transform="rotate(-13 761.250 441.500)" fill="#e4e4dd" stroke="#222" stroke-width="0.700"/>
<ellipse cx="763.750" cy="440.750" rx="12" ry="19.200" transform="rotate(-13 763.750 440.750)" fill="#f1a27c" stroke="#3a1c10" stroke-width="0.700"/>
<path d="M757.500 438 L761.500 432 L766 433.500 L770.500 441 L766.500 448.500 L761.500 447.500 Z" fill="#ef9c74" stroke="#4a2414" stroke-width="0.600"/>
<path d="M757.500 438 L761.500 432 L766 433.500 L762.500 438.500 Z" fill="#c8764c"/>
<path d="M762.500 438.500 L766.500 448.500 M762.500 438.500 L757.500 438" fill="none" stroke="#4a2414" stroke-width="0.500"/>
<ellipse cx="659.500" cy="198.500" rx="6.300" ry="9.300" transform="rotate(-14 659.500 198.500)" fill="#cfcfcb" stroke="#222" stroke-width="0.800"/>
<path d="M655 193 Q653.500 199 656.500 206 M657.500 191.500 Q655.500 199 659 207 M660.500 191 Q658.500 199 662 206.500 M663 193 Q662 199 664.500 204" fill="none" stroke="#6a6a6a" stroke-width="0.700"/>
<path d="M656 191.500 Q652.500 198 656 206.500" fill="none" stroke="#3a3a3a" stroke-width="1"/>
<ellipse cx="814.800" cy="465.500" rx="5.800" ry="8.600" transform="rotate(-14 814.800 465.500)" fill="#cfcfcb" stroke="#222" stroke-width="0.800"/>
<path d="M811 460.500 Q809.500 466 812 472.500 M813.500 459 Q811.500 466 814.500 473.500 M816.500 459 Q814.500 466 817.500 473 M819 461 Q818 466 820 471" fill="none" stroke="#6a6a6a" stroke-width="0.700"/>
<path d="M811.500 459.500 Q808.500 465.500 811.500 473" fill="none" stroke="#3a3a3a" stroke-width="1"/>

<!-- edge lines -->
<g fill="none" stroke="#1c1c1c" stroke-width="0.700">
 <path d="M750 136 L768.500 132.800 L797 124 Q800.500 123.300 804 124.200 L962.400 170 Q972 174 977 181 Q982 190 983.750 201.500 L984.300 211 V443 Q982 455 970 459 L902.500 474 L888 478.500 L840 491.500 Q826 497 820 495"/>
 <path d="M678 154.500 Q679 152.600 682 152 L718 145 L755 135.500"/>
 <path d="M654 159.800 Q658 157.500 663 157 L678 154.500 L786 178.500"/>
 <path d="M802.200 192.700 L822 193.500 L845.400 202.600 Q852 209 856.600 220.600 Q859.500 228 860.500 242 V421 L902.500 410 V474"/>
 <path d="M839 246.500 L860.500 241"/>
 <path d="M839.500 467 L902.500 452 L984.300 432.400"/>
 <path d="M947.750 220.600 V399 L902.500 410"/>
 <path d="M768.500 133.500 L923 178"/>
 <path d="M755 135.500 Q766 144 775 157 Q780 164 784.500 176 Q791 184 798 189 Q806 192.500 820 194"/>
 <path d="M762 134.300 Q770 140 776 148 Q786 160 791.500 179 M768.500 133.500 Q784 150 789 165 Q792 174 791.500 183"/>
 <path d="M717 165 L769 150.500"/>
 <path d="M679 152.800 Q686 150.500 692 152.500 Q698 156 702 160.500"/>
 <path d="M820 194 L889 177 L905 184.600 L927.500 189 Q932 192 933 202 L934 272 Q934 276 930 277 L871 288 V216.700 L933 202"/>
 <path d="M905 184.600 Q915 190 923 178"/>
 <path d="M826 192.500 L862.500 204 Q869 207 871 216.700 M871 212.500 L932.500 197"/>
 <path d="M871 288 L864 293"/>
 <path d="M659.500 353 L680 348.500 M680 240.500 V348.500 M659.500 244.500 L680 240.500"/>
</g>
</g>
</svg>

<svg style="left:1490px;top:70px" width="110" height="90" viewBox="1490 70 110 90">
<defs><filter id="vcS" x="-30%" y="-80%" width="160%" height="260%"><feGaussianBlur stdDeviation="3.5"/></filter></defs>
<path d="M1516 131 L1545 146 L1582 131 L1590 138 L1548 152 L1508 139 Z" fill="#9a9a9a" opacity="0.55" filter="url(#vcS)"/>
<path d="M1511 84.500 L1545.500 79 L1581 84.500 L1544.700 92 Z" fill="#efefef"/>
<path d="M1511 84.500 L1544.700 92 V143.500 L1513.700 129.500 Z" fill="#e3e3e3"/>
<path d="M1544.700 92 L1581 84.500 L1579.400 129.500 L1544.700 143.500 Z" fill="#e9e9e9"/>
<path d="M1538 100 L1551.500 100 V131 L1538 131 Z" fill="#dadada" opacity="0.8"/>
<g fill="none" stroke="#a9a9a9" stroke-width="0.9" stroke-dasharray="4 2">
<path d="M1511 84.500 L1545.500 79 L1581 84.500 L1579.400 129.500 L1544.700 143.500 L1513.700 129.500 Z"/>
<path d="M1511 84.500 L1544.700 92 L1581 84.500 M1544.700 92 V143.500"/>
</g>
<path d="M1538 83 L1548 81.500 L1556 84 L1546 86 Z" fill="none" stroke="#c4c4c4" stroke-width="0.8"/>
<text transform="matrix(1 0.3 0 1 1516.500 113.500)" font-family="Liberation Sans, sans-serif" font-size="9.5" font-weight="bold" fill="#b2b2b2" textLength="23" lengthAdjust="spacingAndGlyphs">FRONT</text>
<text transform="matrix(1 -0.3 0 1 1551.500 120)" font-family="Liberation Sans, sans-serif" font-size="9.5" font-weight="bold" fill="#b2b2b2" textLength="23" lengthAdjust="spacingAndGlyphs">RIGHT</text>
</svg>

<div class="abs" style="left:681px;top:822px;width:137px;height:24px;background:#cdcdcd"></div>
<div class="abs" style="left:825.5px;top:822px;width:93.5px;height:24px;background:#cdcdcd"></div>
<svg style="left:683.5px;top:825px" width="18" height="18" ><use href="#nOrbit" width="18" height="18"/></svg>
<div class="abs" style="left:704.5px;top:832px;border-left:3px solid transparent;border-right:3px solid transparent;border-top:4px solid #222"></div>
<svg style="left:716.5px;top:825px" width="18" height="18" ><use href="#nLook" width="18" height="18"/></svg>
<svg style="left:742px;top:825px" width="18" height="18" ><use href="#nPan" width="18" height="18"/></svg>
<svg style="left:768px;top:825px" width="18" height="18" ><use href="#nZoom" width="18" height="18"/></svg>
<svg style="left:794px;top:825px" width="18" height="18" ><use href="#nFit" width="18" height="18"/></svg>
<svg style="left:829px;top:825px" width="18" height="18" ><use href="#nDisplay" width="18" height="18"/></svg>
<div class="abs" style="left:847.5px;top:832px;border-left:3px solid transparent;border-right:3px solid transparent;border-top:4px solid #222"></div>
<svg style="left:860px;top:825px" width="18" height="18" ><use href="#nGrid" width="18" height="18"/></svg>
<div class="abs" style="left:878px;top:832px;border-left:3px solid transparent;border-right:3px solid transparent;border-top:4px solid #222"></div>
<svg style="left:890.5px;top:826px" width="18" height="16" ><use href="#nViews" width="18" height="16"/></svg>
<div class="abs" style="left:909px;top:832px;border-left:3px solid transparent;border-right:3px solid transparent;border-top:4px solid #222"></div>
<div class="abs" style="left:0;top:852px;width:1600px;height:48px;background:#d4d4d4"></div>
<div class="abs" style="left:0;top:852px;width:1600px;height:8px;background:linear-gradient(#e2e2e2,#dadada)"></div>
<div class="abs" style="left:4px;top:851.5px;width:131px;height:7.500px;background:#ebebeb;border-radius:0 3px 0 0"></div>
<div class="abs" style="left:295px;top:851.5px;width:69px;height:7px;background:#8c8c8c;border-radius:4px"></div>
<svg style="left:0;top:865px" width="136" height="20"><g fill="#444">
<rect x="10.6" y="3" width="2" height="14"/><path d="M23.4 3 V17 L13.4 10 Z"/>
<path d="M44.600 3.500 V16.500 L35.400 10 Z"/><rect x="46" y="7" width="2" height="6"/>
<path d="M63.400 3.500 V16.500 L72.600 10 Z"/><rect x="60" y="7" width="2" height="6"/>
<path d="M85.6 2 V18 L97.6 10 Z"/>
<path d="M110.6 3 V17 L120.6 10 Z"/><rect x="120.6" y="3" width="2" height="14"/>
</g></svg>
<div class="abs" style="left:144px;top:861px;width:20px;height:4px;background:#cd5c5c"></div>
<div class="abs" style="left:168px;top:861px;width:20px;height:4px;background:#e2e2e2"></div>
<div class="abs" style="left:192px;top:861px;width:44px;height:4px;background:#cd5c5c"></div>
<div class="abs" style="left:240px;top:861px;width:44px;height:4px;background:#e2e2e2"></div>
<div class="abs" style="left:288px;top:861px;width:20px;height:4px;background:#afeeee"></div>
<div class="abs" style="left:312px;top:861px;width:44px;height:4px;background:#e2e2e2"></div>
<div class="abs" style="left:360px;top:861px;width:44px;height:4px;background:#daa520"></div>
<div class="abs" style="left:408px;top:861px;width:10px;height:4px;background:#daa520"></div>
<div class="abs" style="left:418px;top:861px;width:10px;height:4px;background:#cd5c5c"></div>
<div class="abs" style="left:432px;top:861px;width:236px;height:4px;background:#daa520"></div>
<div class="abs" style="left:672px;top:861px;width:140px;height:4px;background:#e2e2e2"></div>
<div class="abs" style="left:816px;top:861px;width:20px;height:4px;background:#9acd32"></div>
<div class="abs" style="left:840px;top:861px;width:284px;height:4px;background:#9acd32"></div>
<div class="abs" style="left:1128px;top:861px;width:20px;height:4px;background:#9acd32"></div>
<div class="abs" style="left:1152px;top:861px;width:92px;height:4px;background:#4682b4"></div>
<div class="abs" style="left:1248px;top:861px;width:44px;height:4px;background:#9acd32"></div>
<div class="abs" style="left:1296px;top:861px;width:140px;height:4px;background:#006400"></div>
<div class="abs" style="left:1440px;top:861px;width:20px;height:4px;background:#9acd32"></div>
<div class="abs" style="left:1464px;top:861px;width:44px;height:4px;background:#e6e6fa"></div>
<div class="abs" style="left:1512px;top:861px;width:20px;height:4px;background:#9acd32"></div>
<div class="abs" style="left:1536px;top:861px;width:20px;height:4px;background:#dedede"></div>
<svg style="left:337px;top:860px" width="20" height="6"><path d="M1.6 5 L5.6 1 M7.6 5 L11.6 1 M13.6 5 L17.6 1" stroke="#333" stroke-width="2.4"/></svg>
<div class="abs" style="left:406px;top:865.5px;width:24px;height:23.5px;background:#4d82b6;border-radius:2px"></div>
<svg style="left:145.0px;top:868.5px" width="17" height="17" ><use href="#tExtrude" width="17" height="17"/></svg>
<svg style="left:169.0px;top:868.5px" width="17" height="17" ><use href="#tJoint" width="17" height="17"/></svg>
<svg style="left:193.0px;top:868.5px" width="17" height="17" ><use href="#tComp" width="17" height="17"/></svg>
<svg style="left:217.0px;top:868.5px" width="17" height="17" ><use href="#tSketch" width="17" height="17"/></svg>
<svg style="left:241.0px;top:868.5px" width="17" height="17" ><use href="#tSketch" width="17" height="17"/></svg>
<svg style="left:265.0px;top:868.5px" width="17" height="17" ><use href="#tNewBody" width="17" height="17"/></svg>
<svg style="left:289.0px;top:868.5px" width="17" height="17" ><use href="#tInsert" width="17" height="17"/></svg>
<svg style="left:313.0px;top:868.5px" width="17" height="17" ><use href="#tAsBuilt" width="17" height="17"/></svg>
<svg style="left:337.0px;top:868.5px" width="17" height="17" ><use href="#tNewBody" width="17" height="17"/></svg>
<svg style="left:361.0px;top:868.5px" width="17" height="17" ><use href="#tSketch" width="17" height="17"/></svg>
<svg style="left:385.0px;top:868.5px" width="17" height="17" ><use href="#tExtrude" width="17" height="17"/></svg>
<svg style="left:409.0px;top:868.5px" width="17" height="17" ><use href="#tFillet" width="17" height="17"/></svg>
<svg style="left:433.0px;top:868.5px" width="17" height="17" ><use href="#tSketch" width="17" height="17"/></svg>
<svg style="left:457.0px;top:868.5px" width="17" height="17" ><use href="#tExtrude" width="17" height="17"/></svg>
<svg style="left:481.0px;top:868.5px" width="17" height="17" ><use href="#tSketch" width="17" height="17"/></svg>
<svg style="left:505.0px;top:868.5px" width="17" height="17" ><use href="#tExtrude" width="17" height="17"/></svg>
<svg style="left:529.0px;top:868.5px" width="17" height="17" ><use href="#tSketch" width="17" height="17"/></svg>
<svg style="left:553.0px;top:868.5px" width="17" height="17" ><use href="#tExtrude" width="17" height="17"/></svg>
<svg style="left:577.0px;top:868.5px" width="17" height="17" ><use href="#tSketch" width="17" height="17"/></svg>
<svg style="left:601.0px;top:868.5px" width="17" height="17" ><use href="#tExtrude" width="17" height="17"/></svg>
<svg style="left:625.0px;top:868.5px" width="17" height="17" ><use href="#tFillet" width="17" height="17"/></svg>
<svg style="left:649.0px;top:868.5px" width="17" height="17" ><use href="#tComp" width="17" height="17"/></svg>
<svg style="left:673.0px;top:868.5px" width="17" height="17" ><use href="#tJoint" width="17" height="17"/></svg>
<svg style="left:697.0px;top:868.5px" width="17" height="17" ><use href="#tAxis" width="17" height="17"/></svg>
<svg style="left:721.0px;top:868.5px" width="17" height="17" ><use href="#tPlane" width="17" height="17"/></svg>
<svg style="left:745.0px;top:868.5px" width="17" height="17" ><use href="#tPoint" width="17" height="17"/></svg>
<svg style="left:769.0px;top:868.5px" width="17" height="17" ><use href="#tHole" width="17" height="17"/></svg>
<svg style="left:793.0px;top:868.5px" width="17" height="17" ><use href="#tNewBody" width="17" height="17"/></svg>
<svg style="left:817.0px;top:868.5px" width="17" height="17" ><use href="#tNewBody" width="17" height="17"/></svg>
<svg style="left:841.0px;top:868.5px" width="17" height="17" ><use href="#tSketch" width="17" height="17"/></svg>
<svg style="left:865.0px;top:868.5px" width="17" height="17" ><use href="#tExtrude" width="17" height="17"/></svg>
<svg style="left:889.0px;top:868.5px" width="17" height="17" ><use href="#tSketch" width="17" height="17"/></svg>
<svg style="left:913.0px;top:868.5px" width="17" height="17" ><use href="#tPoint" width="17" height="17"/></svg>
<svg style="left:937.0px;top:868.5px" width="17" height="17" ><use href="#tComp" width="17" height="17"/></svg>
<svg style="left:961.0px;top:868.5px" width="17" height="17" ><use href="#tSketch" width="17" height="17"/></svg>
<svg style="left:985.0px;top:868.5px" width="17" height="17" ><use href="#tRevolve" width="17" height="17"/></svg>
<svg style="left:1009.0px;top:868.5px" width="17" height="17" ><use href="#tOffPlane" width="17" height="17"/></svg>
<svg style="left:1033.0px;top:868.5px" width="17" height="17" ><use href="#tSketch" width="17" height="17"/></svg>
<svg style="left:1057.0px;top:868.5px" width="17" height="17" ><use href="#tRevolve" width="17" height="17"/></svg>
<svg style="left:1081.0px;top:868.5px" width="17" height="17" ><use href="#tComp" width="17" height="17"/></svg>
<svg style="left:1105.0px;top:868.5px" width="17" height="17" ><use href="#tCoil" width="17" height="17"/></svg>
<svg style="left:1129.0px;top:868.5px" width="17" height="17" ><use href="#tNewBody" width="17" height="17"/></svg>
<svg style="left:1153.0px;top:868.5px" width="17" height="17" ><use href="#tSketch" width="17" height="17"/></svg>
<svg style="left:1177.0px;top:868.5px" width="17" height="17" ><use href="#tRevolve" width="17" height="17"/></svg>
<svg style="left:1201.0px;top:868.5px" width="17" height="17" ><use href="#tCoil" width="17" height="17"/></svg>
<svg style="left:1225.0px;top:868.5px" width="17" height="17" ><use href="#tComp" width="17" height="17"/></svg>
<svg style="left:1249.0px;top:868.5px" width="17" height="17" ><use href="#tAsBuilt" width="17" height="17"/></svg>
<svg style="left:1273.0px;top:868.5px" width="17" height="17" ><use href="#tNewBody" width="17" height="17"/></svg>
<svg style="left:1297.0px;top:868.5px" width="17" height="17" ><use href="#tSketch" width="17" height="17"/></svg>
<svg style="left:1321.0px;top:868.5px" width="17" height="17" ><use href="#tRevolve" width="17" height="17"/></svg>
<svg style="left:1345.0px;top:868.5px" width="17" height="17" ><use href="#tSketch" width="17" height="17"/></svg>
<svg style="left:1369.0px;top:868.5px" width="17" height="17" ><use href="#tExtrude" width="17" height="17"/></svg>
<svg style="left:1393.0px;top:868.5px" width="17" height="17" ><use href="#tSketch" width="17" height="17"/></svg>
<svg style="left:1417.0px;top:868.5px" width="17" height="17" ><use href="#tExtrude" width="17" height="17"/></svg>
<svg style="left:1441.0px;top:868.5px" width="17" height="17" ><use href="#tNewBody" width="17" height="17"/></svg>
<svg style="left:1465.0px;top:868.5px" width="17" height="17" ><use href="#tSketch" width="17" height="17"/></svg>
<svg style="left:1489.0px;top:868.5px" width="17" height="17" ><use href="#tExtrude" width="17" height="17"/></svg>
<svg style="left:1513.0px;top:868.5px" width="17" height="17" ><use href="#tNewBody" width="17" height="17"/></svg>
<svg style="left:1537.0px;top:868.5px" width="17" height="17" ><use href="#tSketch" width="17" height="17"/></svg>
<div class="abs" style="left:148px;top:893px;width:1403px;height:2px;background:#5a5a5a"></div>
<div class="abs" style="left:142px;top:893px;width:4px;height:2px;background:#5a5a5a"></div><div class="abs" style="left:136px;top:893px;width:3px;height:2px;background:#5a5a5a"></div>
<div class="abs" style="left:1554px;top:893px;width:4px;height:2px;background:#5a5a5a"></div><div class="abs" style="left:1560px;top:893px;width:3px;height:2px;background:#5a5a5a"></div>
<svg style="left:148px;top:889px" width="1420" height="4"><g fill="#5a5a5a"><rect x="5.5" y="0" width="2" height="4"/><rect x="29.5" y="0" width="2" height="4"/><rect x="53.5" y="0" width="2" height="4"/><rect x="77.5" y="0" width="2" height="4"/><rect x="101.5" y="0" width="2" height="4"/><rect x="125.5" y="0" width="2" height="4"/><rect x="149.5" y="0" width="2" height="4"/><rect x="173.5" y="0" width="2" height="4"/><rect x="197.5" y="0" width="2" height="4"/><rect x="221.5" y="0" width="2" height="4"/><rect x="245.5" y="0" width="2" height="4"/><rect x="269.5" y="0" width="2" height="4"/><rect x="293.5" y="0" width="2" height="4"/><rect x="317.5" y="0" width="2" height="4"/><rect x="341.5" y="0" width="2" height="4"/><rect x="365.5" y="0" width="2" height="4"/><rect x="389.5" y="0" width="2" height="4"/><rect x="413.5" y="0" width="2" height="4"/><rect x="437.5" y="0" width="2" height="4"/><rect x="461.5" y="0" width="2" height="4"/><rect x="485.5" y="0" width="2" height="4"/><rect x="509.5" y="0" width="2" height="4"/><rect x="533.5" y="0" width="2" height="4"/><rect x="557.5" y="0" width="2" height="4"/><rect x="581.5" y="0" width="2" height="4"/><rect x="605.5" y="0" width="2" height="4"/><rect x="629.5" y="0" width="2" height="4"/><rect x="653.5" y="0" width="2" height="4"/><rect x="677.5" y="0" width="2" height="4"/><rect x="701.5" y="0" width="2" height="4"/><rect x="725.5" y="0" width="2" height="4"/><rect x="749.5" y="0" width="2" height="4"/><rect x="773.5" y="0" width="2" height="4"/><rect x="797.5" y="0" width="2" height="4"/><rect x="821.5" y="0" width="2" height="4"/><rect x="845.5" y="0" width="2" height="4"/><rect x="869.5" y="0" width="2" height="4"/><rect x="893.5" y="0" width="2" height="4"/><rect x="917.5" y="0" width="2" height="4"/><rect x="941.5" y="0" width="2" height="4"/><rect x="965.5" y="0" width="2" height="4"/><rect x="989.5" y="0" width="2" height="4"/><rect x="1013.5" y="0" width="2" height="4"/><rect x="1037.5" y="0" width="2" height="4"/><rect x="1061.5" y="0" width="2" height="4"/><rect x="1085.5" y="0" width="2" height="4"/><rect x="1109.5" y="0" width="2" height="4"/><rect x="1133.5" y="0" width="2" height="4"/><rect x="1157.5" y="0" width="2" height="4"/><rect x="1181.5" y="0" width="2" height="4"/><rect x="1205.5" y="0" width="2" height="4"/><rect x="1229.5" y="0" width="2" height="4"/><rect x="1253.5" y="0" width="2" height="4"/><rect x="1277.5" y="0" width="2" height="4"/><rect x="1301.5" y="0" width="2" height="4"/><rect x="1325.5" y="0" width="2" height="4"/><rect x="1349.5" y="0" width="2" height="4"/><rect x="1373.5" y="0" width="2" height="4"/><rect x="1397.5" y="0" width="2" height="4"/></g></svg>
<svg style="left:1580px;top:868px" width="16" height="16" ><use href="#iGear" width="16" height="16"/></svg>
<svg style="left:0;top:894px" width="6" height="6"><path d="M0 0 Q0 6 6 6 H0 Z" fill="#222"/></svg>
<svg style="left:1594px;top:894px" width="6" height="6"><path d="M6 0 Q6 6 0 6 H6 Z" fill="#222"/></svg>
<svg style="left:380px;top:788px" width="84" height="80"><defs><filter id="ttS" x="-20%" y="-20%" width="140%" height="150%"><feGaussianBlur stdDeviation="1.600"/></filter></defs>
<path d="M9.200 3.500 H72 Q76 3.500 76 7.500 V52 Q76 56 72 56 H50.500 L40 69.500 L30 56 H9.200 Q5.200 56 5.200 52 V7.500 Q5.200 3.500 9.200 3.500 Z" fill="#000" opacity="0.300" filter="url(#ttS)" transform="translate(0 1.500)"/>
<path d="M9.200 3.500 H72 Q76 3.500 76 7.500 V52 Q76 56 72 56 H50.500 L40 69.500 L30 56 H9.200 Q5.200 56 5.200 52 V7.500 Q5.200 3.500 9.200 3.500 Z" fill="#d7d7d7" stroke="#6c6c6c" stroke-width="1.300" stroke-linejoin="round"/>
<path d="M11.700 32.800 H69.300" stroke="#707070" stroke-width="1.300"/>
</svg>
<svg style="left:390px;top:799px" width="16" height="16" ><use href="#tFillet" width="16" height="16"/></svg>
<div style="position:absolute;left:411.5px;top:801.22px;font-family:'Liberation Sans',sans-serif;font-size:12.5px;line-height:12.5px;font-weight:normal;color:#1a1a1a;white-space:nowrap;letter-spacing:-0.121px">Fillet1</div>
<div style="position:absolute;left:398.7px;top:824.92px;font-family:'Liberation Sans',sans-serif;font-size:12.5px;line-height:12.5px;font-weight:normal;color:#1a1a1a;white-space:nowrap;letter-spacing:0.065px">Multiple</div>
<svg style="left:425px;top:881px" width="10.5" height="18" ><use href="#cursorB" width="10.5" height="18"/></svg>
</div>
</body>
</html>
